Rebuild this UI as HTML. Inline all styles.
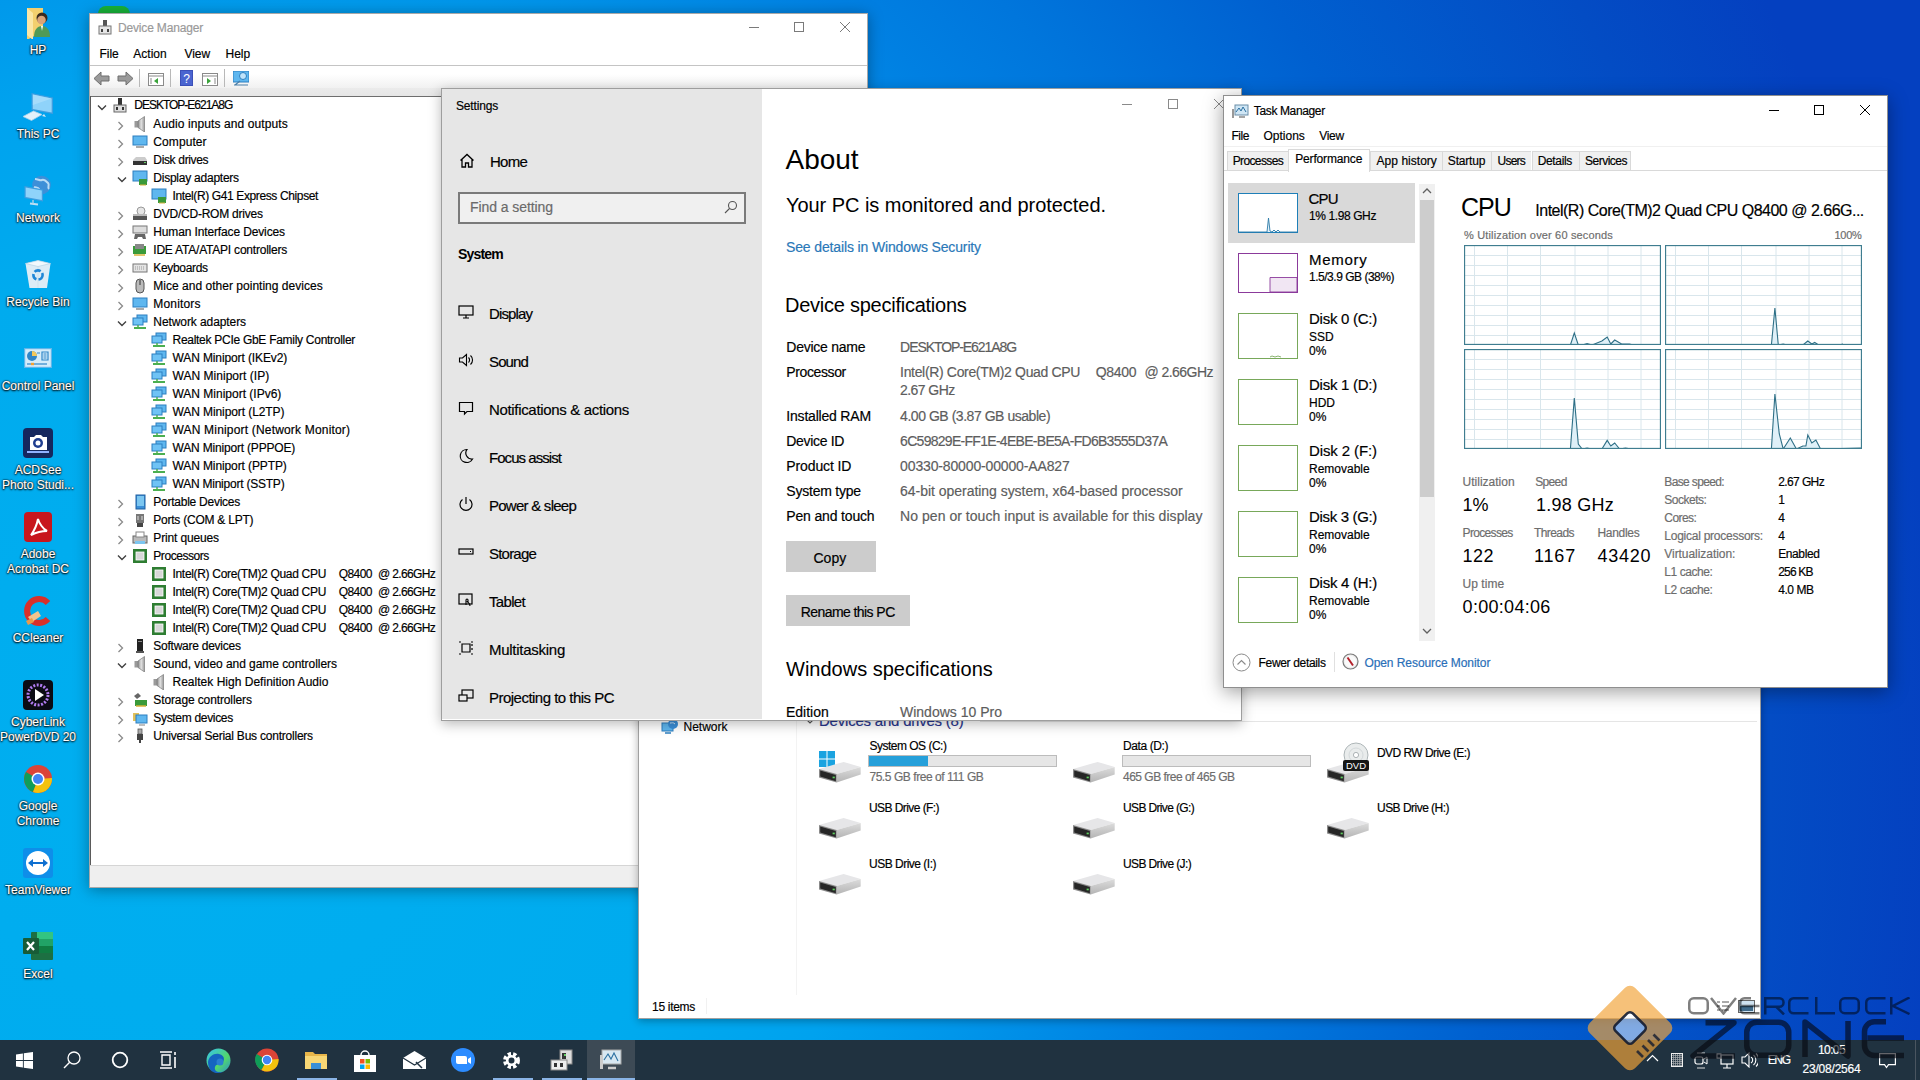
<!DOCTYPE html>
<html><head><meta charset="utf-8"><title>Desktop</title><style>
*{margin:0;padding:0;box-sizing:border-box}
html,body{width:1920px;height:1080px;overflow:hidden}
body{position:relative;font-family:'Liberation Sans',sans-serif;
 background:radial-gradient(circle at 190px 760px,#00aff0 0px,#00abee 500px,#00a2ee 680px,#0096ea 810px,#0080e2 1000px,#0076dc 1110px,#0060d0 1320px,#034cc4 1580px,#0440c0 1750px,#0440c0 2200px);}
.t{position:absolute;line-height:1;white-space:pre;font-family:"Liberation Sans",sans-serif;-webkit-text-stroke:.18px currentColor}
.r{position:absolute}
.win{position:absolute;overflow:hidden}
.dl{color:#fff;font-size:12px;text-shadow:0 0 2px #000,0 1px 2px #000,0 0 1px #000}
</style></head><body>
<svg class="r" style="left:22px;top:7px;" width="32" height="32" viewBox="0 0 32 32"><path d="M5 1h16v26l-5 0-11 6z" fill="#f3cf6e"/><path d="M5 1l6 5v27l-6-5z" fill="#fbe6a6"/><circle cx="20" cy="11" r="5.5" fill="#3b2a1e"/><circle cx="19.5" cy="13" r="4.3" fill="#d9a47a"/><path d="M12 30c0-7 3-11 8-11s8 4 8 11z" fill="#4f9a58"/><path d="M19 19l1 5 1-5z" fill="#fff"/></svg>
<div class="t dl" style="left:0;width:76px;text-align:center;top:44.2px">HP</div>
<svg class="r" style="left:22px;top:91px;" width="32" height="32" viewBox="0 0 32 32"><path d="M9.5 2L31 6.5V23L9.5 19z" fill="#3f9ee0"/><path d="M10.8 3.6L29.7 7.5V21.5L10.8 18z" fill="#8fd3fa"/><path d="M10.8 3.6L29.7 7.5 10.8 14z" fill="#b5e3fc" opacity=".6"/><path d="M22 23l-2 2 4 1" fill="#cfe6f3"/><path d="M1 25.5L11.5 20 20 23.5 9.5 29.5z" fill="#e2f1fa" stroke="#a9d1ea" stroke-width=".8"/></svg>
<div class="t dl" style="left:0;width:76px;text-align:center;top:128.2px">This PC</div>
<svg class="r" style="left:22px;top:175px;" width="32" height="32" viewBox="0 0 32 32"><circle cx="19.5" cy="10" r="9.3" fill="#3d8fd8"/><path d="M13 4c3 0 5 2 7 1s4 1 6 3-1 4 1 6M12 12c2 1 4 0 5 2s0 3 2 4" fill="none" stroke="#b8dcf6" stroke-width="2"/><path d="M2.5 11L21 14.5V26.5L2.5 23z" fill="#3f9ee0"/><path d="M3.7 12.5L19.8 15.5V25L3.7 22z" fill="#8fd3fa"/><path d="M8 28.5l8 1" stroke="#bfe0f4" stroke-width="2"/><path d="M11 25v3.5" stroke="#9fcde8" stroke-width="1.5"/></svg>
<div class="t dl" style="left:0;width:76px;text-align:center;top:212.2px">Network</div>
<svg class="r" style="left:22px;top:259px;" width="32" height="32" viewBox="0 0 32 32"><path d="M3.5 4.5L16 1.5 28.5 4.5 25 29H7.5z" fill="#dcecf6"/><path d="M3.5 4.5L16 1.5 28.5 4.5 16 7.5z" fill="#f2f9fd" stroke="#b7d3e4" stroke-width=".7"/><path d="M16 7.5V29" stroke="#c6dde9" stroke-width=".6"/><circle cx="16" cy="16" r="4.6" fill="none" stroke="#1f86d6" stroke-width="2.6" stroke-dasharray="6.5 2.2"/></svg>
<div class="t dl" style="left:0;width:76px;text-align:center;top:296.2px">Recycle Bin</div>
<svg class="r" style="left:22px;top:343px;" width="32" height="32" viewBox="0 0 32 32"><rect x="2" y="5" width="28" height="20" fill="#5fb6ea"/><rect x="3.2" y="6.2" width="25.6" height="17.6" fill="#d5ecfa"/><circle cx="10" cy="13" r="5" fill="#2f86c8"/><path d="M10 13V8a5 5 0 0 1 5 5z" fill="#f4c85a"/><path d="M15 10h3M20 9h6v8h-6z" fill="none" stroke="#2f86c8" stroke-width="1.2"/><path d="M21.5 11h3M21.5 13h3M21.5 15h3" stroke="#2f86c8" stroke-width="1"/><path d="M5 21h20" stroke="#2f86c8" stroke-width="1.2"/><rect x="9" y="19.8" width="3" height="2.4" fill="#f4a030"/></svg>
<div class="t dl" style="left:0;width:76px;text-align:center;top:380.2px">Control Panel</div>
<svg class="r" style="left:22px;top:427px;" width="32" height="32" viewBox="0 0 32 32"><rect x="1" y="1" width="30" height="30" rx="4" fill="#15275e"/><path d="M8 10h4l2-2h5l2 2h4v13H8z" fill="#fff"/><circle cx="16" cy="16" r="5" fill="#1e3d8f"/><circle cx="16" cy="16" r="2.5" fill="#fff"/><path d="M5 25h22" stroke="#8fb0ff" stroke-width="2"/></svg>
<div class="t dl" style="left:0;width:76px;text-align:center;top:464.2px">ACDSee</div>
<div class="t dl" style="left:0;width:76px;text-align:center;top:479.2px">Photo Studi...</div>
<svg class="r" style="left:22px;top:511px;" width="32" height="32" viewBox="0 0 32 32"><rect x="2" y="1" width="28" height="30" rx="4" fill="#c8161d"/><path d="M9 24c3-4 6-11 7-16 1 4 5 10 9 12-5 0-10 1-16 4z" fill="none" stroke="#fff" stroke-width="2"/></svg>
<div class="t dl" style="left:0;width:76px;text-align:center;top:548.2px">Adobe</div>
<div class="t dl" style="left:0;width:76px;text-align:center;top:563.2px">Acrobat DC</div>
<svg class="r" style="left:22px;top:595px;" width="32" height="32" viewBox="0 0 32 32"><path d="M26 8a12 12 0 1 0 0 16" fill="none" stroke="#d9302a" stroke-width="6"/><path d="M6 22l10-6 3 5-9 6z" fill="#f2c48e"/><path d="M4 26l6-3 2 4-6 3z" fill="#e89a4c"/></svg>
<div class="t dl" style="left:0;width:76px;text-align:center;top:632.2px">CCleaner</div>
<svg class="r" style="left:22px;top:679px;" width="32" height="32" viewBox="0 0 32 32"><rect x="1" y="1" width="30" height="30" rx="4" fill="#0b0b14"/><circle cx="16" cy="16" r="10" fill="none" stroke="#b07cf0" stroke-width="3" stroke-dasharray="2 1.5"/><path d="M13 10l9 6-9 6z" fill="#fff"/></svg>
<div class="t dl" style="left:0;width:76px;text-align:center;top:716.2px">CyberLink</div>
<div class="t dl" style="left:0;width:76px;text-align:center;top:731.2px">PowerDVD 20</div>
<svg class="r" style="left:22px;top:763px;" width="32" height="32" viewBox="0 0 32 32"><circle cx="16" cy="16" r="14" fill="#db4437"/><path d="M16 16L4 9A14 14 0 0 0 11 29z" fill="#0f9d58"/><path d="M16 16l-5 13A14 14 0 0 0 30 15z" fill="#f4c20d"/><circle cx="16" cy="16" r="6.5" fill="#fff"/><circle cx="16" cy="16" r="5" fill="#4285f4"/></svg>
<div class="t dl" style="left:0;width:76px;text-align:center;top:800.2px">Google</div>
<div class="t dl" style="left:0;width:76px;text-align:center;top:815.2px">Chrome</div>
<svg class="r" style="left:22px;top:847px;" width="32" height="32" viewBox="0 0 32 32"><rect x="1" y="1" width="30" height="30" rx="3" fill="#0e8ee9"/><circle cx="16" cy="16" r="12" fill="#fff"/><path d="M6 16l5-4v3h10v-3l5 4-5 4v-3H11v3z" fill="#0e6fd0"/></svg>
<div class="t dl" style="left:0;width:76px;text-align:center;top:884.2px">TeamViewer</div>
<svg class="r" style="left:22px;top:931px;" width="32" height="32" viewBox="0 0 32 32"><rect x="9" y="1" width="22" height="28" rx="1" fill="#1d6f42"/><rect x="15" y="1" width="16" height="7" fill="#33c481"/><rect x="15" y="8" width="16" height="7" fill="#21a366"/><rect x="15" y="15" width="16" height="7" fill="#107c41"/><rect x="1" y="7" width="16" height="16" rx="1" fill="#185c37"/><path d="M5 11l7 8M12 11l-7 8" stroke="#fff" stroke-width="2.2"/></svg>
<div class="t dl" style="left:0;width:76px;text-align:center;top:968.2px">Excel</div>
<div class="r" style="left:98px;top:6px;width:32px;height:8px;background:#18b33a;border-radius:14px 14px 0 0"></div>
<div class="win" style="left:89px;top:13px;width:779px;height:875px;background:#fff;border:1px solid #a8a8a8;box-shadow:0 2px 14px rgba(0,0,0,.35)"></div>
<svg class="r" style="left:98px;top:19px;" width="14" height="16" viewBox="0 0 14 16"><rect x="5" y="1" width="4" height="6" fill="#555"/><rect x="1" y="7" width="12" height="8" fill="#e6e6e6" stroke="#777" stroke-width="1"/><rect x="3" y="10" width="2" height="3" fill="#444"/><rect x="9" y="10" width="2" height="3" fill="#444"/></svg>
<div class="t" style="left:118.00px;top:21.86px;font-size:12px;color:#9a9a9a;letter-spacing:-0.170px;">Device Manager</div>
<div class="r" style="left:749px;top:27px;width:10px;height:1px;background:#7a7a7a;"></div>
<div class="r" style="left:794px;top:22px;width:10px;height:10px;background:transparent;border:1px solid #7a7a7a"></div>
<svg class="r" style="left:840px;top:22px;" width="10" height="10" viewBox="0 0 10 10"><path d="M0 0l10 10M10 0L0 10" stroke="#7a7a7a" stroke-width="1"/></svg>
<div class="t" style="left:99.40px;top:47.86px;font-size:12px;color:#000;">File</div>
<div class="t" style="left:133.30px;top:47.86px;font-size:12px;color:#000;">Action</div>
<div class="t" style="left:184.40px;top:47.86px;font-size:12px;color:#000;">View</div>
<div class="t" style="left:225.50px;top:47.86px;font-size:12px;color:#000;">Help</div>
<div class="r" style="left:90px;top:65px;width:777px;height:1px;background:#c4c4c4;"></div>
<div class="r" style="left:90px;top:74px;width:777px;height:14px;background:linear-gradient(#fff,#f1f1f1);"></div>
<div class="r" style="left:90px;top:88px;width:777px;height:8px;background:linear-gradient(#ebebeb,#e6e6e6);"></div>
<svg class="r" style="left:93px;top:71px;" width="17" height="15" viewBox="0 0 17 15"><path d="M1 7.5L8 1v4h8v5H8v4z" fill="#9a9a9a" stroke="#6e6e6e" stroke-width="1"/></svg>
<svg class="r" style="left:117px;top:71px;" width="17" height="15" viewBox="0 0 17 15"><path d="M16 7.5L9 1v4H1v5h8v4z" fill="#9a9a9a" stroke="#6e6e6e" stroke-width="1"/></svg>
<div class="r" style="left:139px;top:69px;width:1px;height:18px;background:#b8b8b8;"></div>
<div class="r" style="left:170px;top:69px;width:1px;height:18px;background:#b8b8b8;"></div>
<div class="r" style="left:224px;top:69px;width:1px;height:18px;background:#b8b8b8;"></div>
<svg class="r" style="left:148px;top:73px;" width="16" height="13" viewBox="0 0 16 13"><rect x=".5" y=".5" width="15" height="12" fill="#fff" stroke="#8a8a8a"/><path d="M1 3h14" stroke="#8a8a8a"/><path d="M10 5l-4 3 4 3z" fill="#3aa33a"/><path d="M2 6h2M2 8h2M2 10h2" stroke="#8a8a8a"/></svg>
<svg class="r" style="left:180px;top:70px;" width="13" height="16" viewBox="0 0 13 16"><rect x="0" y="0" width="13" height="16" fill="#3b4fb8"/><rect x="1" y="1" width="11" height="14" fill="#4a64d0"/><text x="6.5" y="12.5" font-size="12" font-family="Liberation Sans" fill="#fff" text-anchor="middle">?</text></svg>
<svg class="r" style="left:202px;top:73px;" width="16" height="13" viewBox="0 0 16 13"><rect x=".5" y=".5" width="15" height="12" fill="#fff" stroke="#8a8a8a"/><path d="M1 3h14" stroke="#8a8a8a"/><path d="M5 5l4 3-4 3z" fill="#3aa33a"/><path d="M12 6h2M12 8h2M12 10h2" stroke="#8a8a8a"/></svg>
<svg class="r" style="left:233px;top:71px;" width="16" height="15" viewBox="0 0 16 15"><rect x="0" y="0" width="16" height="11" fill="#5fb7ef" stroke="#2d7fc0" stroke-width="1"/><circle cx="10" cy="5" r="3.5" fill="#bfe3fa" stroke="#2d7fc0"/><path d="M2 14l5-4M1 14h14" stroke="#4a7fa8" stroke-width="1.2"/></svg>
<div class="r" style="left:90px;top:96px;width:777px;height:1px;background:#6e6e6e;"></div>
<div class="r" style="left:90px;top:96px;width:1px;height:769px;background:#5a5a5a;"></div>
<div class="r" style="left:90px;top:865px;width:777px;height:1px;background:#d5d5d5;"></div>
<div class="r" style="left:90px;top:866px;width:777px;height:21px;background:#efefef;"></div>
<svg class="r" style="left:97px;top:102.5px;" width="10" height="9" viewBox="0 0 10 9"><path d="M1 2.5l4 4 4-4" fill="none" stroke="#404040" stroke-width="1.4"/></svg>
<svg class="r" style="left:112px;top:97px;" width="16" height="16" viewBox="0 0 16 16"><rect x="6" y="1" width="4" height="7" fill="#333"/><rect x="2" y="8" width="12" height="7" fill="#ddd" stroke="#666" stroke-width="1"/><rect x="4" y="10" width="2" height="3" fill="#333"/><rect x="10" y="10" width="2" height="3" fill="#333"/></svg>
<div class="t" style="left:134.30px;top:99.36px;font-size:12px;color:#000;letter-spacing:-1.011px;">DESKTOP-E621A8G</div>
<svg class="r" style="left:117px;top:120.5px;" width="10" height="10" viewBox="0 0 10 10"><path d="M1.5 1l4 4-4 4" fill="none" stroke="#8a8a8a" stroke-width="1.3"/></svg>
<svg class="r" style="left:132px;top:116px;" width="16" height="16" viewBox="0 0 16 16"><defs><linearGradient id="spk" x1="0" y1="0" x2="1" y2="0"><stop offset="0" stop-color="#8c8c8c"/><stop offset=".5" stop-color="#e2e2e2"/><stop offset="1" stop-color="#9a9a9a"/></linearGradient></defs><rect x="2.5" y="5" width="3.5" height="6.5" fill="#9a9a9a"/><path d="M6 5L12.5 .5V16L6 11.5z" fill="url(#spk)" stroke="#7a7a7a" stroke-width=".7"/></svg>
<div class="t" style="left:153.30px;top:117.86px;font-size:12px;color:#000;letter-spacing:0.100px;">Audio inputs and outputs</div>
<svg class="r" style="left:117px;top:138.5px;" width="10" height="10" viewBox="0 0 10 10"><path d="M1.5 1l4 4-4 4" fill="none" stroke="#8a8a8a" stroke-width="1.3"/></svg>
<svg class="r" style="left:132px;top:134px;" width="16" height="16" viewBox="0 0 16 16"><rect x="1" y="2" width="14" height="9" fill="#5fb7ef" stroke="#2d7fc0" stroke-width="1"/><path d="M4 13h8" stroke="#aaa" stroke-width="2"/></svg>
<div class="t" style="left:153.30px;top:135.86px;font-size:12px;color:#000;letter-spacing:0.089px;">Computer</div>
<svg class="r" style="left:117px;top:156.5px;" width="10" height="10" viewBox="0 0 10 10"><path d="M1.5 1l4 4-4 4" fill="none" stroke="#8a8a8a" stroke-width="1.3"/></svg>
<svg class="r" style="left:132px;top:152px;" width="16" height="16" viewBox="0 0 16 16"><path d="M1 8l3-3h9l2 3v4H1z" fill="#ccc"/><rect x="1" y="9" width="14" height="4" fill="#333"/><rect x="12" y="10" width="2" height="1" fill="#6c6"/></svg>
<div class="t" style="left:153.30px;top:153.86px;font-size:12px;color:#000;letter-spacing:-0.335px;">Disk drives</div>
<svg class="r" style="left:117px;top:174.5px;" width="10" height="10" viewBox="0 0 10 10"><path d="M1 2.5l4 4 4-4" fill="none" stroke="#404040" stroke-width="1.4"/></svg>
<svg class="r" style="left:132px;top:170px;" width="16" height="16" viewBox="0 0 16 16"><rect x="1" y="1" width="14" height="10" fill="#5fb7ef" stroke="#2d7fc0" stroke-width="1"/><rect x="7" y="9" width="8" height="6" fill="#3a9a3a"/><path d="M8 15h6" stroke="#d8b23a" stroke-width="1"/></svg>
<div class="t" style="left:153.30px;top:171.86px;font-size:12px;color:#000;letter-spacing:-0.237px;">Display adapters</div>
<svg class="r" style="left:151px;top:188px;" width="16" height="16" viewBox="0 0 16 16"><rect x="1" y="1" width="14" height="10" fill="#5fb7ef" stroke="#2d7fc0" stroke-width="1"/><rect x="7" y="9" width="8" height="6" fill="#3a9a3a"/><path d="M8 15h6" stroke="#d8b23a" stroke-width="1"/></svg>
<div class="t" style="left:172.50px;top:189.86px;font-size:12px;color:#000;letter-spacing:-0.377px;">Intel(R) G41 Express Chipset</div>
<svg class="r" style="left:117px;top:210.5px;" width="10" height="10" viewBox="0 0 10 10"><path d="M1.5 1l4 4-4 4" fill="none" stroke="#8a8a8a" stroke-width="1.3"/></svg>
<svg class="r" style="left:132px;top:206px;" width="16" height="16" viewBox="0 0 16 16"><circle cx="9" cy="5" r="4" fill="#e6e6e6" stroke="#999" stroke-width="1"/><rect x="1" y="9" width="14" height="5" fill="#555"/><rect x="1" y="8" width="14" height="2" fill="#bbb"/></svg>
<div class="t" style="left:153.30px;top:207.86px;font-size:12px;color:#000;letter-spacing:-0.232px;">DVD/CD-ROM drives</div>
<svg class="r" style="left:117px;top:228.5px;" width="10" height="10" viewBox="0 0 10 10"><path d="M1.5 1l4 4-4 4" fill="none" stroke="#8a8a8a" stroke-width="1.3"/></svg>
<svg class="r" style="left:132px;top:224px;" width="16" height="16" viewBox="0 0 16 16"><rect x="1" y="2" width="14" height="7" fill="#ddd" stroke="#777" stroke-width="1"/><path d="M3 10h10l1 5h-3l-1-2H6l-1 2H2z" fill="#666"/></svg>
<div class="t" style="left:153.30px;top:225.86px;font-size:12px;color:#000;letter-spacing:-0.136px;">Human Interface Devices</div>
<svg class="r" style="left:117px;top:246.5px;" width="10" height="10" viewBox="0 0 10 10"><path d="M1.5 1l4 4-4 4" fill="none" stroke="#8a8a8a" stroke-width="1.3"/></svg>
<svg class="r" style="left:132px;top:242px;" width="16" height="16" viewBox="0 0 16 16"><rect x="1" y="4" width="13" height="8" fill="#3a9a3a"/><rect x="3" y="2" width="9" height="5" fill="#888"/><path d="M2 13h11" stroke="#d8b23a" stroke-width="1.5"/></svg>
<div class="t" style="left:153.30px;top:243.86px;font-size:12px;color:#000;letter-spacing:-0.214px;">IDE ATA/ATAPI controllers</div>
<svg class="r" style="left:117px;top:264.5px;" width="10" height="10" viewBox="0 0 10 10"><path d="M1.5 1l4 4-4 4" fill="none" stroke="#8a8a8a" stroke-width="1.3"/></svg>
<svg class="r" style="left:132px;top:260px;" width="16" height="16" viewBox="0 0 16 16"><rect x="1" y="4" width="14" height="8" fill="#e4e4e4" stroke="#777" stroke-width="1"/><path d="M3 7h10M3 9h10" stroke="#999" stroke-width="1" stroke-dasharray="1 1"/></svg>
<div class="t" style="left:153.30px;top:261.86px;font-size:12px;color:#000;letter-spacing:-0.319px;">Keyboards</div>
<svg class="r" style="left:117px;top:282.5px;" width="10" height="10" viewBox="0 0 10 10"><path d="M1.5 1l4 4-4 4" fill="none" stroke="#8a8a8a" stroke-width="1.3"/></svg>
<svg class="r" style="left:132px;top:278px;" width="16" height="16" viewBox="0 0 16 16"><rect x="4" y="1" width="8" height="14" rx="4" fill="#bbb" stroke="#555" stroke-width="1"/><path d="M8 2v5" stroke="#333"/></svg>
<div class="t" style="left:153.30px;top:279.86px;font-size:12px;color:#000;letter-spacing:0.020px;">Mice and other pointing devices</div>
<svg class="r" style="left:117px;top:300.5px;" width="10" height="10" viewBox="0 0 10 10"><path d="M1.5 1l4 4-4 4" fill="none" stroke="#8a8a8a" stroke-width="1.3"/></svg>
<svg class="r" style="left:132px;top:296px;" width="16" height="16" viewBox="0 0 16 16"><rect x="1" y="2" width="14" height="9" fill="#5fb7ef" stroke="#2d7fc0" stroke-width="1"/><path d="M4 13h8" stroke="#aaa" stroke-width="2"/></svg>
<div class="t" style="left:153.30px;top:297.86px;font-size:12px;color:#000;letter-spacing:0.173px;">Monitors</div>
<svg class="r" style="left:117px;top:318.5px;" width="10" height="10" viewBox="0 0 10 10"><path d="M1 2.5l4 4 4-4" fill="none" stroke="#404040" stroke-width="1.4"/></svg>
<svg class="r" style="left:132px;top:314px;" width="16" height="16" viewBox="0 0 16 16"><rect x="5" y="1" width="10" height="7" fill="#5fb7ef" stroke="#2d7fc0" stroke-width="1"/><rect x="1" y="4" width="10" height="7" fill="#6fc3f5" stroke="#2d7fc0" stroke-width="1"/><path d="M2 14h12" stroke="#4caf50" stroke-width="2"/><path d="M6 11v3" stroke="#4caf50" stroke-width="1.5"/></svg>
<div class="t" style="left:153.30px;top:315.86px;font-size:12px;color:#000;letter-spacing:-0.084px;">Network adapters</div>
<svg class="r" style="left:151px;top:332px;" width="16" height="16" viewBox="0 0 16 16"><rect x="5" y="1" width="10" height="7" fill="#5fb7ef" stroke="#2d7fc0" stroke-width="1"/><rect x="1" y="4" width="10" height="7" fill="#6fc3f5" stroke="#2d7fc0" stroke-width="1"/><path d="M2 14h12" stroke="#4caf50" stroke-width="2"/><path d="M6 11v3" stroke="#4caf50" stroke-width="1.5"/></svg>
<div class="t" style="left:172.50px;top:333.86px;font-size:12px;color:#000;letter-spacing:-0.279px;">Realtek PCIe GbE Family Controller</div>
<svg class="r" style="left:151px;top:350px;" width="16" height="16" viewBox="0 0 16 16"><rect x="5" y="1" width="10" height="7" fill="#5fb7ef" stroke="#2d7fc0" stroke-width="1"/><rect x="1" y="4" width="10" height="7" fill="#6fc3f5" stroke="#2d7fc0" stroke-width="1"/><path d="M2 14h12" stroke="#4caf50" stroke-width="2"/><path d="M6 11v3" stroke="#4caf50" stroke-width="1.5"/></svg>
<div class="t" style="left:172.50px;top:351.86px;font-size:12px;color:#000;letter-spacing:-0.115px;">WAN Miniport (IKEv2)</div>
<svg class="r" style="left:151px;top:368px;" width="16" height="16" viewBox="0 0 16 16"><rect x="5" y="1" width="10" height="7" fill="#5fb7ef" stroke="#2d7fc0" stroke-width="1"/><rect x="1" y="4" width="10" height="7" fill="#6fc3f5" stroke="#2d7fc0" stroke-width="1"/><path d="M2 14h12" stroke="#4caf50" stroke-width="2"/><path d="M6 11v3" stroke="#4caf50" stroke-width="1.5"/></svg>
<div class="t" style="left:172.50px;top:369.86px;font-size:12px;color:#000;letter-spacing:0.033px;">WAN Miniport (IP)</div>
<svg class="r" style="left:151px;top:386px;" width="16" height="16" viewBox="0 0 16 16"><rect x="5" y="1" width="10" height="7" fill="#5fb7ef" stroke="#2d7fc0" stroke-width="1"/><rect x="1" y="4" width="10" height="7" fill="#6fc3f5" stroke="#2d7fc0" stroke-width="1"/><path d="M2 14h12" stroke="#4caf50" stroke-width="2"/><path d="M6 11v3" stroke="#4caf50" stroke-width="1.5"/></svg>
<div class="t" style="left:172.50px;top:387.86px;font-size:12px;color:#000;letter-spacing:-0.006px;">WAN Miniport (IPv6)</div>
<svg class="r" style="left:151px;top:404px;" width="16" height="16" viewBox="0 0 16 16"><rect x="5" y="1" width="10" height="7" fill="#5fb7ef" stroke="#2d7fc0" stroke-width="1"/><rect x="1" y="4" width="10" height="7" fill="#6fc3f5" stroke="#2d7fc0" stroke-width="1"/><path d="M2 14h12" stroke="#4caf50" stroke-width="2"/><path d="M6 11v3" stroke="#4caf50" stroke-width="1.5"/></svg>
<div class="t" style="left:172.50px;top:405.86px;font-size:12px;color:#000;letter-spacing:-0.088px;">WAN Miniport (L2TP)</div>
<svg class="r" style="left:151px;top:422px;" width="16" height="16" viewBox="0 0 16 16"><rect x="5" y="1" width="10" height="7" fill="#5fb7ef" stroke="#2d7fc0" stroke-width="1"/><rect x="1" y="4" width="10" height="7" fill="#6fc3f5" stroke="#2d7fc0" stroke-width="1"/><path d="M2 14h12" stroke="#4caf50" stroke-width="2"/><path d="M6 11v3" stroke="#4caf50" stroke-width="1.5"/></svg>
<div class="t" style="left:172.50px;top:423.86px;font-size:12px;color:#000;letter-spacing:0.182px;">WAN Miniport (Network Monitor)</div>
<svg class="r" style="left:151px;top:440px;" width="16" height="16" viewBox="0 0 16 16"><rect x="5" y="1" width="10" height="7" fill="#5fb7ef" stroke="#2d7fc0" stroke-width="1"/><rect x="1" y="4" width="10" height="7" fill="#6fc3f5" stroke="#2d7fc0" stroke-width="1"/><path d="M2 14h12" stroke="#4caf50" stroke-width="2"/><path d="M6 11v3" stroke="#4caf50" stroke-width="1.5"/></svg>
<div class="t" style="left:172.50px;top:441.86px;font-size:12px;color:#000;letter-spacing:-0.183px;">WAN Miniport (PPPOE)</div>
<svg class="r" style="left:151px;top:458px;" width="16" height="16" viewBox="0 0 16 16"><rect x="5" y="1" width="10" height="7" fill="#5fb7ef" stroke="#2d7fc0" stroke-width="1"/><rect x="1" y="4" width="10" height="7" fill="#6fc3f5" stroke="#2d7fc0" stroke-width="1"/><path d="M2 14h12" stroke="#4caf50" stroke-width="2"/><path d="M6 11v3" stroke="#4caf50" stroke-width="1.5"/></svg>
<div class="t" style="left:172.50px;top:459.86px;font-size:12px;color:#000;letter-spacing:-0.107px;">WAN Miniport (PPTP)</div>
<svg class="r" style="left:151px;top:476px;" width="16" height="16" viewBox="0 0 16 16"><rect x="5" y="1" width="10" height="7" fill="#5fb7ef" stroke="#2d7fc0" stroke-width="1"/><rect x="1" y="4" width="10" height="7" fill="#6fc3f5" stroke="#2d7fc0" stroke-width="1"/><path d="M2 14h12" stroke="#4caf50" stroke-width="2"/><path d="M6 11v3" stroke="#4caf50" stroke-width="1.5"/></svg>
<div class="t" style="left:172.50px;top:477.86px;font-size:12px;color:#000;letter-spacing:-0.228px;">WAN Miniport (SSTP)</div>
<svg class="r" style="left:117px;top:498.5px;" width="10" height="10" viewBox="0 0 10 10"><path d="M1.5 1l4 4-4 4" fill="none" stroke="#8a8a8a" stroke-width="1.3"/></svg>
<svg class="r" style="left:132px;top:494px;" width="16" height="16" viewBox="0 0 16 16"><rect x="4" y="1" width="9" height="14" fill="#3a8fd8" stroke="#1f5f9f" stroke-width="1"/><rect x="5" y="2" width="7" height="10" fill="#7cc6f0"/></svg>
<div class="t" style="left:153.30px;top:495.86px;font-size:12px;color:#000;letter-spacing:-0.251px;">Portable Devices</div>
<svg class="r" style="left:117px;top:516.5px;" width="10" height="10" viewBox="0 0 10 10"><path d="M1.5 1l4 4-4 4" fill="none" stroke="#8a8a8a" stroke-width="1.3"/></svg>
<svg class="r" style="left:132px;top:512px;" width="16" height="16" viewBox="0 0 16 16"><rect x="4" y="2" width="8" height="9" fill="#777"/><rect x="5" y="11" width="6" height="4" fill="#444"/><path d="M6 4v4M10 4v4" stroke="#ddd"/></svg>
<div class="t" style="left:153.30px;top:513.86px;font-size:12px;color:#000;letter-spacing:-0.236px;">Ports (COM &amp; LPT)</div>
<svg class="r" style="left:117px;top:534.5px;" width="10" height="10" viewBox="0 0 10 10"><path d="M1.5 1l4 4-4 4" fill="none" stroke="#8a8a8a" stroke-width="1.3"/></svg>
<svg class="r" style="left:132px;top:530px;" width="16" height="16" viewBox="0 0 16 16"><rect x="1" y="6" width="14" height="7" fill="#bbb" stroke="#666" stroke-width="1"/><rect x="4" y="2" width="8" height="5" fill="#fff" stroke="#888" stroke-width="1"/><rect x="3" y="11" width="10" height="3" fill="#7cc6f0"/></svg>
<div class="t" style="left:153.30px;top:531.86px;font-size:12px;color:#000;letter-spacing:-0.149px;">Print queues</div>
<svg class="r" style="left:117px;top:552.5px;" width="10" height="10" viewBox="0 0 10 10"><path d="M1 2.5l4 4 4-4" fill="none" stroke="#404040" stroke-width="1.4"/></svg>
<svg class="r" style="left:132px;top:548px;" width="16" height="16" viewBox="0 0 16 16"><rect x="1" y="1" width="14" height="14" fill="#2e7d32"/><rect x="4" y="4" width="8" height="8" fill="#d8d8d8" stroke="#fff" stroke-width=".8"/></svg>
<div class="t" style="left:153.30px;top:549.86px;font-size:12px;color:#000;letter-spacing:-0.443px;">Processors</div>
<svg class="r" style="left:151px;top:566px;" width="16" height="16" viewBox="0 0 16 16"><rect x="1" y="1" width="14" height="14" fill="#2e7d32"/><rect x="4" y="4" width="8" height="8" fill="#d8d8d8" stroke="#fff" stroke-width=".8"/></svg>
<div class="t" style="left:172.50px;top:567.86px;font-size:12px;color:#000;letter-spacing:-0.317px;">Intel(R) Core(TM)2 Quad CPU</div>
<div class="t" style="left:338.80px;top:567.86px;font-size:12px;color:#000;letter-spacing:-0.606px;">Q8400</div>
<div class="t" style="left:378.00px;top:567.86px;font-size:12px;color:#000;letter-spacing:-0.653px;">@ 2.66GHz</div>
<svg class="r" style="left:151px;top:584px;" width="16" height="16" viewBox="0 0 16 16"><rect x="1" y="1" width="14" height="14" fill="#2e7d32"/><rect x="4" y="4" width="8" height="8" fill="#d8d8d8" stroke="#fff" stroke-width=".8"/></svg>
<div class="t" style="left:172.50px;top:585.86px;font-size:12px;color:#000;letter-spacing:-0.317px;">Intel(R) Core(TM)2 Quad CPU</div>
<div class="t" style="left:338.80px;top:585.86px;font-size:12px;color:#000;letter-spacing:-0.606px;">Q8400</div>
<div class="t" style="left:378.00px;top:585.86px;font-size:12px;color:#000;letter-spacing:-0.653px;">@ 2.66GHz</div>
<svg class="r" style="left:151px;top:602px;" width="16" height="16" viewBox="0 0 16 16"><rect x="1" y="1" width="14" height="14" fill="#2e7d32"/><rect x="4" y="4" width="8" height="8" fill="#d8d8d8" stroke="#fff" stroke-width=".8"/></svg>
<div class="t" style="left:172.50px;top:603.86px;font-size:12px;color:#000;letter-spacing:-0.317px;">Intel(R) Core(TM)2 Quad CPU</div>
<div class="t" style="left:338.80px;top:603.86px;font-size:12px;color:#000;letter-spacing:-0.606px;">Q8400</div>
<div class="t" style="left:378.00px;top:603.86px;font-size:12px;color:#000;letter-spacing:-0.653px;">@ 2.66GHz</div>
<svg class="r" style="left:151px;top:620px;" width="16" height="16" viewBox="0 0 16 16"><rect x="1" y="1" width="14" height="14" fill="#2e7d32"/><rect x="4" y="4" width="8" height="8" fill="#d8d8d8" stroke="#fff" stroke-width=".8"/></svg>
<div class="t" style="left:172.50px;top:621.86px;font-size:12px;color:#000;letter-spacing:-0.317px;">Intel(R) Core(TM)2 Quad CPU</div>
<div class="t" style="left:338.80px;top:621.86px;font-size:12px;color:#000;letter-spacing:-0.606px;">Q8400</div>
<div class="t" style="left:378.00px;top:621.86px;font-size:12px;color:#000;letter-spacing:-0.653px;">@ 2.66GHz</div>
<svg class="r" style="left:117px;top:642.5px;" width="10" height="10" viewBox="0 0 10 10"><path d="M1.5 1l4 4-4 4" fill="none" stroke="#8a8a8a" stroke-width="1.3"/></svg>
<svg class="r" style="left:132px;top:638px;" width="16" height="16" viewBox="0 0 16 16"><rect x="5" y="1" width="6" height="12" fill="#222"/><rect x="4" y="13" width="8" height="2" fill="#555"/><rect x="6" y="3" width="4" height="1" fill="#888"/></svg>
<div class="t" style="left:153.30px;top:639.86px;font-size:12px;color:#000;letter-spacing:-0.249px;">Software devices</div>
<svg class="r" style="left:117px;top:660.5px;" width="10" height="10" viewBox="0 0 10 10"><path d="M1 2.5l4 4 4-4" fill="none" stroke="#404040" stroke-width="1.4"/></svg>
<svg class="r" style="left:132px;top:656px;" width="16" height="16" viewBox="0 0 16 16"><defs><linearGradient id="spk" x1="0" y1="0" x2="1" y2="0"><stop offset="0" stop-color="#8c8c8c"/><stop offset=".5" stop-color="#e2e2e2"/><stop offset="1" stop-color="#9a9a9a"/></linearGradient></defs><rect x="2.5" y="5" width="3.5" height="6.5" fill="#9a9a9a"/><path d="M6 5L12.5 .5V16L6 11.5z" fill="url(#spk)" stroke="#7a7a7a" stroke-width=".7"/></svg>
<div class="t" style="left:153.30px;top:657.86px;font-size:12px;color:#000;letter-spacing:-0.056px;">Sound, video and game controllers</div>
<svg class="r" style="left:151px;top:674px;" width="16" height="16" viewBox="0 0 16 16"><defs><linearGradient id="spk" x1="0" y1="0" x2="1" y2="0"><stop offset="0" stop-color="#8c8c8c"/><stop offset=".5" stop-color="#e2e2e2"/><stop offset="1" stop-color="#9a9a9a"/></linearGradient></defs><rect x="2.5" y="5" width="3.5" height="6.5" fill="#9a9a9a"/><path d="M6 5L12.5 .5V16L6 11.5z" fill="url(#spk)" stroke="#7a7a7a" stroke-width=".7"/></svg>
<div class="t" style="left:172.50px;top:675.86px;font-size:12px;color:#000;letter-spacing:0.016px;">Realtek High Definition Audio</div>
<svg class="r" style="left:117px;top:696.5px;" width="10" height="10" viewBox="0 0 10 10"><path d="M1.5 1l4 4-4 4" fill="none" stroke="#8a8a8a" stroke-width="1.3"/></svg>
<svg class="r" style="left:132px;top:692px;" width="16" height="16" viewBox="0 0 16 16"><path d="M2 4l4-3 3 3-4 3z" fill="#666"/><rect x="3" y="8" width="12" height="6" fill="#3a9a3a"/><path d="M4 14h10" stroke="#d8b23a" stroke-width="1.5"/></svg>
<div class="t" style="left:153.30px;top:693.86px;font-size:12px;color:#000;letter-spacing:-0.117px;">Storage controllers</div>
<svg class="r" style="left:117px;top:714.5px;" width="10" height="10" viewBox="0 0 10 10"><path d="M1.5 1l4 4-4 4" fill="none" stroke="#8a8a8a" stroke-width="1.3"/></svg>
<svg class="r" style="left:132px;top:710px;" width="16" height="16" viewBox="0 0 16 16"><rect x="1" y="3" width="6" height="8" fill="#e2c15b"/><rect x="4" y="5" width="11" height="8" fill="#5fb7ef" stroke="#2d7fc0" stroke-width="1"/><path d="M7 15h6" stroke="#aaa" stroke-width="1.5"/></svg>
<div class="t" style="left:153.30px;top:711.86px;font-size:12px;color:#000;letter-spacing:-0.317px;">System devices</div>
<svg class="r" style="left:117px;top:732.5px;" width="10" height="10" viewBox="0 0 10 10"><path d="M1.5 1l4 4-4 4" fill="none" stroke="#8a8a8a" stroke-width="1.3"/></svg>
<svg class="r" style="left:132px;top:728px;" width="16" height="16" viewBox="0 0 16 16"><rect x="6" y="1" width="4" height="5" fill="#aaa" stroke="#555" stroke-width=".8"/><rect x="5" y="6" width="6" height="6" fill="#444"/><rect x="7" y="12" width="2" height="3" fill="#444"/></svg>
<div class="t" style="left:153.30px;top:729.86px;font-size:12px;color:#000;letter-spacing:-0.223px;">Universal Serial Bus controllers</div>
<div class="win" style="left:638px;top:100px;width:1123px;height:919px;background:#fff;border:1px solid #a0a0a0;box-shadow:0 2px 8px rgba(0,0,0,.3)"></div>
<div class="r" style="left:796px;top:700px;width:1px;height:295px;background:#f3f3f3;"></div>
<svg class="r" style="left:661px;top:718px;" width="18" height="16" viewBox="0 0 18 16"><rect x="1" y="5" width="11" height="8" fill="#5fb7ef" stroke="#2d7fc0"/><circle cx="12" cy="6" r="5" fill="#3a8fd8"/><path d="M9 5c2 0 3-1 5 1" stroke="#cfe9ff" fill="none"/><path d="M4 15h6" stroke="#2d7fc0" stroke-width="1.5"/></svg>
<div class="t" style="left:683.50px;top:720.86px;font-size:12px;color:#000;letter-spacing:-0.002px;">Network</div>
<div class="t" style="left:819.00px;top:712.83px;font-size:15px;color:#27358c;letter-spacing:-0.215px;">Devices and drives (8)</div>
<div class="r" style="left:980px;top:721px;width:777px;height:1px;background:#e5e5e5;"></div>
<svg class="r" style="left:805px;top:718px;" width="10" height="7" viewBox="0 0 10 7"><path d="M1 1l4 4 4-4" fill="none" stroke="#555" stroke-width="1.2"/></svg>
<svg class="r" style="left:819px;top:751px;" width="17" height="17" viewBox="0 0 17 17"><rect x="0" y="0" width="7.5" height="7.5" fill="#1aa3e0"/><rect x="8.5" y="0" width="7.5" height="7.5" fill="#1aa3e0"/><rect x="0" y="8.5" width="7.5" height="7.5" fill="#1aa3e0"/><rect x="8.5" y="8.5" width="7.5" height="7.5" fill="#1aa3e0"/></svg>
<svg class="r" style="left:814px;top:754px;" width="52" height="32" viewBox="0 0 52 32"><defs><linearGradient id="hr" x1="0" y1="0" x2="0" y2="1"><stop offset="0" stop-color="#dcdcdc"/><stop offset="1" stop-color="#b4b4b4"/></linearGradient></defs><path d="M5 15.1L29.6 7.9 46.7 13 22.7 19.9z" fill="#e6e6e8"/><path d="M22.7 19.9L46.7 13V20.6L22.7 28.6z" fill="url(#hr)"/><path d="M5 15.1L22.7 19.9V28.6L5 23.4z" fill="#8a8a8a"/><path d="M6.2 16.6L21.8 20.9V27.2L6.2 22.6z" fill="#262626"/><rect x="18.6" y="22.6" width="2.2" height="1.7" fill="#5fcf5f"/></svg>
<div class="t" style="left:869.40px;top:739.86px;font-size:12px;color:#000;letter-spacing:-0.501px;">System OS (C:)</div>
<div class="r" style="left:868px;top:755px;width:189px;height:12px;background:#e6e6e6;border:1px solid #bcbcbc"></div>
<div class="r" style="left:869px;top:756px;width:59px;height:10px;background:#26a0da;"></div>
<div class="t" style="left:869.40px;top:771.36px;font-size:12px;color:#6d6d6d;letter-spacing:-0.438px;">75.5 GB free of 111 GB</div>
<svg class="r" style="left:1068px;top:754px;" width="52" height="32" viewBox="0 0 52 32"><defs><linearGradient id="hr" x1="0" y1="0" x2="0" y2="1"><stop offset="0" stop-color="#dcdcdc"/><stop offset="1" stop-color="#b4b4b4"/></linearGradient></defs><path d="M5 15.1L29.6 7.9 46.7 13 22.7 19.9z" fill="#e6e6e8"/><path d="M22.7 19.9L46.7 13V20.6L22.7 28.6z" fill="url(#hr)"/><path d="M5 15.1L22.7 19.9V28.6L5 23.4z" fill="#8a8a8a"/><path d="M6.2 16.6L21.8 20.9V27.2L6.2 22.6z" fill="#262626"/><rect x="18.6" y="22.6" width="2.2" height="1.7" fill="#5fcf5f"/></svg>
<div class="t" style="left:1123.00px;top:739.86px;font-size:12px;color:#000;letter-spacing:-0.410px;">Data (D:)</div>
<div class="r" style="left:1122px;top:755px;width:189px;height:12px;background:#e6e6e6;border:1px solid #bcbcbc"></div>
<div class="t" style="left:1123.00px;top:771.36px;font-size:12px;color:#6d6d6d;letter-spacing:-0.504px;">465 GB free of 465 GB</div>
<svg class="r" style="left:1322px;top:740px;" width="52" height="46" viewBox="0 0 52 46"><g transform="translate(0 14)"><defs><linearGradient id="hr2" x1="0" y1="0" x2="0" y2="1"><stop offset="0" stop-color="#dcdcdc"/><stop offset="1" stop-color="#b4b4b4"/></linearGradient></defs><path d="M5 15.1L29.6 7.9 46.7 13 22.7 19.9z" fill="#e6e6e8"/><path d="M22.7 19.9L46.7 13V20.6L22.7 28.6z" fill="url(#hr2)"/><path d="M5 15.1L22.7 19.9V28.6L5 23.4z" fill="#8a8a8a"/><path d="M6.2 16.6L21.8 20.9V27.2L6.2 22.6z" fill="#262626"/><rect x="18.6" y="22.6" width="2.2" height="1.7" fill="#5fcf5f"/></g><circle cx="34" cy="15" r="12" fill="#e9ecec" stroke="#aeb6b8" stroke-width="1"/><circle cx="34" cy="15" r="7" fill="none" stroke="#d3d8da" stroke-width="1"/><circle cx="34" cy="15" r="2.6" fill="#fff" stroke="#9aa2a4" stroke-width=".8"/><rect x="21" y="20" width="26" height="11" rx="2" fill="#161616"/><text x="34" y="29.2" font-size="9.5" font-family="Liberation Sans" fill="#fff" text-anchor="middle">DVD</text></svg>
<div class="t" style="left:1377.00px;top:747.06px;font-size:12px;color:#000;letter-spacing:-0.556px;">DVD RW Drive (E:)</div>
<svg class="r" style="left:814px;top:810px;" width="52" height="32" viewBox="0 0 52 32"><defs><linearGradient id="hr" x1="0" y1="0" x2="0" y2="1"><stop offset="0" stop-color="#dcdcdc"/><stop offset="1" stop-color="#b4b4b4"/></linearGradient></defs><path d="M5 15.1L29.6 7.9 46.7 13 22.7 19.9z" fill="#e6e6e8"/><path d="M22.7 19.9L46.7 13V20.6L22.7 28.6z" fill="url(#hr)"/><path d="M5 15.1L22.7 19.9V28.6L5 23.4z" fill="#8a8a8a"/><path d="M6.2 16.6L21.8 20.9V27.2L6.2 22.6z" fill="#262626"/><rect x="18.6" y="22.6" width="2.2" height="1.7" fill="#5fcf5f"/></svg>
<div class="t" style="left:869.00px;top:802.36px;font-size:12px;color:#000;letter-spacing:-0.571px;">USB Drive (F:)</div>
<svg class="r" style="left:1068px;top:810px;" width="52" height="32" viewBox="0 0 52 32"><defs><linearGradient id="hr" x1="0" y1="0" x2="0" y2="1"><stop offset="0" stop-color="#dcdcdc"/><stop offset="1" stop-color="#b4b4b4"/></linearGradient></defs><path d="M5 15.1L29.6 7.9 46.7 13 22.7 19.9z" fill="#e6e6e8"/><path d="M22.7 19.9L46.7 13V20.6L22.7 28.6z" fill="url(#hr)"/><path d="M5 15.1L22.7 19.9V28.6L5 23.4z" fill="#8a8a8a"/><path d="M6.2 16.6L21.8 20.9V27.2L6.2 22.6z" fill="#262626"/><rect x="18.6" y="22.6" width="2.2" height="1.7" fill="#5fcf5f"/></svg>
<div class="t" style="left:1123.00px;top:802.36px;font-size:12px;color:#000;letter-spacing:-0.644px;">USB Drive (G:)</div>
<svg class="r" style="left:1322px;top:810px;" width="52" height="32" viewBox="0 0 52 32"><defs><linearGradient id="hr" x1="0" y1="0" x2="0" y2="1"><stop offset="0" stop-color="#dcdcdc"/><stop offset="1" stop-color="#b4b4b4"/></linearGradient></defs><path d="M5 15.1L29.6 7.9 46.7 13 22.7 19.9z" fill="#e6e6e8"/><path d="M22.7 19.9L46.7 13V20.6L22.7 28.6z" fill="url(#hr)"/><path d="M5 15.1L22.7 19.9V28.6L5 23.4z" fill="#8a8a8a"/><path d="M6.2 16.6L21.8 20.9V27.2L6.2 22.6z" fill="#262626"/><rect x="18.6" y="22.6" width="2.2" height="1.7" fill="#5fcf5f"/></svg>
<div class="t" style="left:1377.00px;top:802.36px;font-size:12px;color:#000;letter-spacing:-0.525px;">USB Drive (H:)</div>
<svg class="r" style="left:814px;top:866px;" width="52" height="32" viewBox="0 0 52 32"><defs><linearGradient id="hr" x1="0" y1="0" x2="0" y2="1"><stop offset="0" stop-color="#dcdcdc"/><stop offset="1" stop-color="#b4b4b4"/></linearGradient></defs><path d="M5 15.1L29.6 7.9 46.7 13 22.7 19.9z" fill="#e6e6e8"/><path d="M22.7 19.9L46.7 13V20.6L22.7 28.6z" fill="url(#hr)"/><path d="M5 15.1L22.7 19.9V28.6L5 23.4z" fill="#8a8a8a"/><path d="M6.2 16.6L21.8 20.9V27.2L6.2 22.6z" fill="#262626"/><rect x="18.6" y="22.6" width="2.2" height="1.7" fill="#5fcf5f"/></svg>
<div class="t" style="left:869.00px;top:858.36px;font-size:12px;color:#000;letter-spacing:-0.501px;">USB Drive (I:)</div>
<svg class="r" style="left:1068px;top:866px;" width="52" height="32" viewBox="0 0 52 32"><defs><linearGradient id="hr" x1="0" y1="0" x2="0" y2="1"><stop offset="0" stop-color="#dcdcdc"/><stop offset="1" stop-color="#b4b4b4"/></linearGradient></defs><path d="M5 15.1L29.6 7.9 46.7 13 22.7 19.9z" fill="#e6e6e8"/><path d="M22.7 19.9L46.7 13V20.6L22.7 28.6z" fill="url(#hr)"/><path d="M5 15.1L22.7 19.9V28.6L5 23.4z" fill="#8a8a8a"/><path d="M6.2 16.6L21.8 20.9V27.2L6.2 22.6z" fill="#262626"/><rect x="18.6" y="22.6" width="2.2" height="1.7" fill="#5fcf5f"/></svg>
<div class="t" style="left:1123.00px;top:858.36px;font-size:12px;color:#000;letter-spacing:-0.619px;">USB Drive (J:)</div>
<div class="t" style="left:652.00px;top:1000.66px;font-size:12px;color:#000;letter-spacing:-0.295px;">15 items</div>
<div class="r" style="left:706px;top:998px;width:1px;height:16px;background:#f1f1f1;"></div>
<svg class="r" style="left:1716px;top:1000px;" width="14" height="14" viewBox="0 0 14 14"><path d="M1 2h3M1 6h3M1 10h3M6 2h7M6 6h7M6 10h7" stroke="#555"/></svg>
<svg class="r" style="left:1738px;top:1000px;" width="18" height="14" viewBox="0 0 18 14"><rect x=".5" y=".5" width="16" height="12" fill="#cfe2f0" stroke="#666"/><rect x="2" y="6" width="13" height="5" fill="#3f6a8a"/></svg>
<div class="win" style="left:441px;top:88px;width:801px;height:633px;background:#fff;border:1px solid #9e9e9e;box-shadow:0 3px 12px rgba(0,0,0,.28)"></div>
<div class="r" style="left:442px;top:89px;width:320px;height:630px;background:#e6e6e6;"></div>
<div class="t" style="left:456.00px;top:99.56px;font-size:12px;color:#000;letter-spacing:-0.170px;">Settings</div>
<div class="r" style="left:1122px;top:104px;width:10px;height:1px;background:#8a8a8a;"></div>
<div class="r" style="left:1168px;top:99px;width:10px;height:10px;background:transparent;border:1px solid #8a8a8a"></div>
<svg class="r" style="left:1214px;top:99px;" width="10" height="10" viewBox="0 0 10 10"><path d="M0 0l10 10M10 0L0 10" stroke="#8a8a8a" stroke-width="1"/></svg>
<svg class="r" style="left:459px;top:153px;" width="16" height="16" viewBox="0 0 16 16"><path d="M1.5 7.5L8 1.5l6.5 6M3 6.5v7.5h3.5v-4h3v4H13V6.5" fill="none" stroke="#000" stroke-width="1.3"/></svg>
<div class="t" style="left:490.00px;top:153.62px;font-size:15px;color:#000;letter-spacing:-0.754px;">Home</div>
<div class="r" style="left:458px;top:192px;width:288px;height:32px;background:#f0f0f0;border:2px solid #7a7a7a"></div>
<div class="t" style="left:470.00px;top:199.97px;font-size:14px;color:#6a6a6a;letter-spacing:-0.076px;">Find a setting</div>
<svg class="r" style="left:724px;top:200px;" width="14" height="14" viewBox="0 0 14 14"><circle cx="8.5" cy="5.5" r="4" fill="none" stroke="#555" stroke-width="1.1"/><path d="M5.5 8.5L1 13" stroke="#555" stroke-width="1.1"/></svg>
<div class="t" style="left:458.00px;top:247.17px;font-size:14px;color:#000;font-weight:700;letter-spacing:-0.802px;-webkit-text-stroke:0;">System</div>
<svg class="r" style="left:458px;top:304.0px;" width="16" height="16" viewBox="0 0 16 16"><rect x="1" y="2" width="14" height="9" fill="none" stroke="#000" stroke-width="1.2"/><path d="M8 11v3M5 14h6" stroke="#000" stroke-width="1.2"/></svg>
<div class="t" style="left:489.00px;top:305.82px;font-size:15px;color:#000;letter-spacing:-0.884px;">Display</div>
<svg class="r" style="left:458px;top:352.0px;" width="16" height="16" viewBox="0 0 16 16"><path d="M1.5 6h3l4-3.5v11l-4-3.5h-3z" fill="none" stroke="#000" stroke-width="1.1"/><path d="M10.5 5.5a3.5 3.5 0 0 1 0 5M12.5 3.5a6 6 0 0 1 0 9" fill="none" stroke="#000" stroke-width="1.1"/></svg>
<div class="t" style="left:489.00px;top:353.82px;font-size:15px;color:#000;letter-spacing:-0.875px;">Sound</div>
<svg class="r" style="left:458px;top:400.0px;" width="16" height="16" viewBox="0 0 16 16"><path d="M1.5 2.5h13v9H9l-2.5 2.5v-2.5h-5z" fill="none" stroke="#000" stroke-width="1.2"/></svg>
<div class="t" style="left:489.00px;top:401.82px;font-size:15px;color:#000;letter-spacing:-0.329px;">Notifications &amp; actions</div>
<svg class="r" style="left:458px;top:448.0px;" width="16" height="16" viewBox="0 0 16 16"><path d="M9 1.5a6.5 6.5 0 1 0 5.5 9.5A6 6 0 0 1 9 1.5z" fill="none" stroke="#000" stroke-width="1.2"/></svg>
<div class="t" style="left:489.00px;top:449.82px;font-size:15px;color:#000;letter-spacing:-0.947px;">Focus assist</div>
<svg class="r" style="left:458px;top:496.0px;" width="16" height="16" viewBox="0 0 16 16"><path d="M8 1v7" stroke="#000" stroke-width="1.2"/><path d="M4.5 3.5a6 6 0 1 0 7 0" fill="none" stroke="#000" stroke-width="1.2"/></svg>
<div class="t" style="left:489.00px;top:497.82px;font-size:15px;color:#000;letter-spacing:-0.748px;">Power &amp; sleep</div>
<svg class="r" style="left:458px;top:544.0px;" width="16" height="16" viewBox="0 0 16 16"><rect x="1" y="5" width="14" height="5" fill="none" stroke="#000" stroke-width="1.2"/><path d="M12 7.5h1" stroke="#000"/></svg>
<div class="t" style="left:489.00px;top:545.83px;font-size:15px;color:#000;letter-spacing:-0.792px;">Storage</div>
<svg class="r" style="left:458px;top:592.0px;" width="16" height="16" viewBox="0 0 16 16"><rect x="1" y="2" width="13" height="10" fill="none" stroke="#000" stroke-width="1.2"/><path d="M9 9c1 2 3 2 3 5M8 13v-5a1 1 0 0 1 2 0v3" fill="none" stroke="#000" stroke-width="1.1"/></svg>
<div class="t" style="left:489.00px;top:593.83px;font-size:15px;color:#000;letter-spacing:-0.672px;">Tablet</div>
<svg class="r" style="left:458px;top:640.0px;" width="16" height="16" viewBox="0 0 16 16"><path d="M1 2h2M1 14h2M4 4h8v8H4zM13 2h2M13 14h2M14 4v2M14 8v2" fill="none" stroke="#000" stroke-width="1.2"/></svg>
<div class="t" style="left:489.00px;top:641.83px;font-size:15px;color:#000;letter-spacing:-0.267px;">Multitasking</div>
<svg class="r" style="left:458px;top:688.0px;" width="16" height="16" viewBox="0 0 16 16"><rect x="4" y="2" width="11" height="8" fill="none" stroke="#000" stroke-width="1.2"/><rect x="1" y="7" width="8" height="6" fill="#e6e6e6" stroke="#000" stroke-width="1.2"/></svg>
<div class="t" style="left:489.00px;top:689.83px;font-size:15px;color:#000;letter-spacing:-0.519px;">Projecting to this PC</div>
<div class="t" style="left:785.50px;top:146.34px;font-size:28px;color:#000;letter-spacing:-0.034px;-webkit-text-stroke:0;">About</div>
<div class="t" style="left:786.00px;top:194.90px;font-size:20px;color:#000;letter-spacing:-0.048px;-webkit-text-stroke:0;">Your PC is monitored and protected.</div>
<div class="t" style="left:786.00px;top:240.17px;font-size:14px;color:#2a78b8;letter-spacing:-0.136px;">See details in Windows Security</div>
<div class="t" style="left:785.00px;top:294.90px;font-size:20px;color:#000;letter-spacing:-0.250px;-webkit-text-stroke:0;">Device specifications</div>
<div class="t" style="left:786.30px;top:340.17px;font-size:14px;color:#000;letter-spacing:-0.246px;">Device name</div>
<div class="t" style="left:900.10px;top:340.17px;font-size:14px;color:#5d5d5d;letter-spacing:-1.069px;">DESKTOP-E621A8G</div>
<div class="t" style="left:786.30px;top:365.37px;font-size:14px;color:#000;letter-spacing:-0.392px;">Processor</div>
<div class="t" style="left:786.30px;top:409.17px;font-size:14px;color:#000;letter-spacing:-0.197px;">Installed RAM</div>
<div class="t" style="left:900.10px;top:409.17px;font-size:14px;color:#5d5d5d;letter-spacing:-0.462px;">4.00 GB (3.87 GB usable)</div>
<div class="t" style="left:786.30px;top:434.17px;font-size:14px;color:#000;letter-spacing:-0.321px;">Device ID</div>
<div class="t" style="left:900.10px;top:434.17px;font-size:14px;color:#5d5d5d;letter-spacing:-0.711px;">6C59829E-FF1E-4EBE-BE5A-FD6B3555D37A</div>
<div class="t" style="left:786.30px;top:459.17px;font-size:14px;color:#000;letter-spacing:-0.114px;">Product ID</div>
<div class="t" style="left:900.10px;top:459.17px;font-size:14px;color:#5d5d5d;letter-spacing:-0.144px;">00330-80000-00000-AA827</div>
<div class="t" style="left:786.30px;top:484.17px;font-size:14px;color:#000;letter-spacing:-0.221px;">System type</div>
<div class="t" style="left:900.10px;top:484.17px;font-size:14px;color:#5d5d5d;letter-spacing:-0.035px;">64-bit operating system, x64-based processor</div>
<div class="t" style="left:786.30px;top:509.17px;font-size:14px;color:#000;letter-spacing:-0.161px;">Pen and touch</div>
<div class="t" style="left:900.10px;top:509.17px;font-size:14px;color:#5d5d5d;letter-spacing:0.039px;">No pen or touch input is available for this display</div>
<div class="t" style="left:900.10px;top:365.37px;font-size:14px;color:#5d5d5d;letter-spacing:-0.335px;">Intel(R) Core(TM)2 Quad CPU</div>
<div class="t" style="left:1095.70px;top:365.37px;font-size:14px;color:#5d5d5d;letter-spacing:-0.309px;">Q8400</div>
<div class="t" style="left:1144.50px;top:365.37px;font-size:14px;color:#5d5d5d;letter-spacing:-0.540px;">@ 2.66GHz</div>
<div class="t" style="left:900.10px;top:383.37px;font-size:14px;color:#5d5d5d;letter-spacing:-0.580px;">2.67 GHz</div>
<div class="r" style="left:786px;top:541px;width:90px;height:31px;background:#cccccc;"></div>
<div class="t" style="left:813.50px;top:550.67px;font-size:14px;color:#000;">Copy</div>
<div class="r" style="left:786px;top:595px;width:124px;height:31px;background:#cccccc;"></div>
<div class="t" style="left:800.70px;top:604.67px;font-size:14px;color:#000;letter-spacing:-0.567px;">Rename this PC</div>
<div class="t" style="left:786.00px;top:659.10px;font-size:20px;color:#000;-webkit-text-stroke:0;">Windows specifications</div>
<div class="t" style="left:786.00px;top:705.17px;font-size:14px;color:#000;">Edition</div>
<div class="t" style="left:900.00px;top:705.17px;font-size:14px;color:#5d5d5d;">Windows 10 Pro</div>
<div class="win" style="left:1223px;top:95px;width:665px;height:593px;background:#fff;border:1px solid #8f8f8f;box-shadow:0 4px 18px rgba(0,0,0,.38)"></div>
<svg class="r" style="left:1231px;top:104px;" width="18" height="15" viewBox="0 0 18 15"><rect x="4" y="1" width="13" height="10" fill="#cfe6f5" stroke="#6a8ea8"/><path d="M5 8l3-4 2 3 2-4 3 5" fill="none" stroke="#2a6fa0" stroke-width="1"/><rect x="1" y="5" width="2" height="9" fill="#999"/><path d="M8 13h6" stroke="#888" stroke-width="1.5"/></svg>
<div class="t" style="left:1253.80px;top:104.96px;font-size:12px;color:#000;letter-spacing:-0.365px;">Task Manager</div>
<div class="r" style="left:1769px;top:110px;width:10px;height:1px;background:#000;"></div>
<div class="r" style="left:1814px;top:105px;width:10px;height:10px;background:transparent;border:1px solid #000"></div>
<svg class="r" style="left:1860px;top:105px;" width="10" height="10" viewBox="0 0 10 10"><path d="M0 0l10 10M10 0L0 10" stroke="#000" stroke-width="1"/></svg>
<div class="t" style="left:1231.40px;top:130.16px;font-size:12px;color:#000;letter-spacing:-0.461px;">File</div>
<div class="t" style="left:1263.40px;top:130.16px;font-size:12px;color:#000;letter-spacing:0.020px;">Options</div>
<div class="t" style="left:1319.30px;top:130.16px;font-size:12px;color:#000;letter-spacing:-0.324px;">View</div>
<div class="r" style="left:1224px;top:146px;width:663px;height:1px;background:#f0f0f0;"></div>
<div class="r" style="left:1224px;top:170px;width:663px;height:1px;background:#d9d9d9;"></div>
<div class="r" style="left:1226.5px;top:150.5px;width:61.09999999999991px;height:20px;background:#f0f0f0;border:1px solid #d9d9d9;border-right:none"></div>
<div class="t" style="left:1232.70px;top:154.66px;font-size:12px;color:#000;letter-spacing:-0.626px;">Processes</div>
<div class="r" style="left:1287.6px;top:148.5px;width:82.80000000000018px;height:23px;background:#fff;border:1px solid #d9d9d9;border-bottom:none"></div>
<div class="t" style="left:1295.20px;top:152.66px;font-size:12px;color:#000;letter-spacing:-0.155px;">Performance</div>
<div class="r" style="left:1370.4px;top:150.5px;width:71.19999999999982px;height:20px;background:#f0f0f0;border:1px solid #d9d9d9;border-right:none"></div>
<div class="t" style="left:1376.60px;top:154.66px;font-size:12px;color:#000;letter-spacing:0.024px;">App history</div>
<div class="r" style="left:1441.6px;top:150.5px;width:49.700000000000045px;height:20px;background:#f0f0f0;border:1px solid #d9d9d9;border-right:none"></div>
<div class="t" style="left:1447.80px;top:154.66px;font-size:12px;color:#000;letter-spacing:-0.172px;">Startup</div>
<div class="r" style="left:1491.3px;top:150.5px;width:40.200000000000045px;height:20px;background:#f0f0f0;border:1px solid #d9d9d9;border-right:none"></div>
<div class="t" style="left:1497.50px;top:154.66px;font-size:12px;color:#000;letter-spacing:-0.769px;">Users</div>
<div class="r" style="left:1531.5px;top:150.5px;width:47.299999999999955px;height:20px;background:#f0f0f0;border:1px solid #d9d9d9;border-right:none"></div>
<div class="t" style="left:1537.70px;top:154.66px;font-size:12px;color:#000;letter-spacing:-0.348px;">Details</div>
<div class="r" style="left:1578.8px;top:150.5px;width:52.0px;height:20px;background:#f0f0f0;border:1px solid #d9d9d9"></div>
<div class="t" style="left:1585.00px;top:154.66px;font-size:12px;color:#000;letter-spacing:-0.502px;">Services</div>
<div class="r" style="left:1228px;top:183px;width:187px;height:60px;background:#d9d9d9;"></div>
<svg class="r" style="left:1238px;top:193px;" width="60" height="40" viewBox="0 0 60 40"><rect x=".5" y=".5" width="59" height="39" fill="#fff" stroke="#1e7fb8"/><path d="M1 39L29 39 30.5 25 32 38 34 39 36 37 38 39 40 37 42 39 59 39" fill="#e3f1f9" stroke="#2b7aa8" stroke-width=".9"/></svg>
<div class="t" style="left:1308.60px;top:191.32px;font-size:15px;color:#000;letter-spacing:-0.891px;">CPU</div>
<div class="t" style="left:1309.00px;top:210.26px;font-size:12px;color:#000;letter-spacing:-0.398px;">1% 1.98 GHz</div>
<svg class="r" style="left:1238px;top:253px;" width="60" height="40" viewBox="0 0 60 40"><rect x=".5" y=".5" width="59" height="39" fill="#fff" stroke="#8b3a9b"/><path d="M32 39V24.5h27V39z" fill="#f1e6f3" stroke="#8b3a9b" stroke-width=".9"/></svg>
<div class="t" style="left:1309.00px;top:251.72px;font-size:15px;color:#000;letter-spacing:0.721px;">Memory</div>
<div class="t" style="left:1309.00px;top:270.56px;font-size:12px;color:#000;letter-spacing:-0.482px;">1.5/3.9 GB (38%)</div>
<svg class="r" style="left:1238px;top:313px;" width="60" height="46" viewBox="0 0 60 46"><rect x=".5" y=".5" width="59" height="45" fill="#fff" stroke="#78a85a"/><path d="M32 44l2-1 3 1 3-1 3 1" stroke="#6aa04a" fill="none" stroke-width=".8"/></svg>
<div class="t" style="left:1309.00px;top:311.22px;font-size:15px;color:#000;letter-spacing:-0.259px;">Disk 0 (C:)</div>
<div class="t" style="left:1309.00px;top:330.66px;font-size:12px;color:#000;">SSD</div>
<div class="t" style="left:1309.00px;top:344.96px;font-size:12px;color:#000;">0%</div>
<svg class="r" style="left:1238px;top:379px;" width="60" height="46" viewBox="0 0 60 46"><rect x=".5" y=".5" width="59" height="45" fill="#fff" stroke="#78a85a"/></svg>
<div class="t" style="left:1309.00px;top:377.22px;font-size:15px;color:#000;letter-spacing:-0.259px;">Disk 1 (D:)</div>
<div class="t" style="left:1309.00px;top:396.66px;font-size:12px;color:#000;">HDD</div>
<div class="t" style="left:1309.00px;top:410.96px;font-size:12px;color:#000;">0%</div>
<svg class="r" style="left:1238px;top:445px;" width="60" height="46" viewBox="0 0 60 46"><rect x=".5" y=".5" width="59" height="45" fill="#fff" stroke="#78a85a"/></svg>
<div class="t" style="left:1309.00px;top:443.22px;font-size:15px;color:#000;letter-spacing:-0.107px;">Disk 2 (F:)</div>
<div class="t" style="left:1309.00px;top:462.66px;font-size:12px;color:#000;">Removable</div>
<div class="t" style="left:1309.00px;top:476.96px;font-size:12px;color:#000;">0%</div>
<svg class="r" style="left:1238px;top:511px;" width="60" height="46" viewBox="0 0 60 46"><rect x=".5" y=".5" width="59" height="45" fill="#fff" stroke="#78a85a"/></svg>
<div class="t" style="left:1309.00px;top:509.22px;font-size:15px;color:#000;letter-spacing:-0.334px;">Disk 3 (G:)</div>
<div class="t" style="left:1309.00px;top:528.66px;font-size:12px;color:#000;">Removable</div>
<div class="t" style="left:1309.00px;top:542.96px;font-size:12px;color:#000;">0%</div>
<svg class="r" style="left:1238px;top:577px;" width="60" height="46" viewBox="0 0 60 46"><rect x=".5" y=".5" width="59" height="45" fill="#fff" stroke="#78a85a"/></svg>
<div class="t" style="left:1309.00px;top:575.23px;font-size:15px;color:#000;letter-spacing:-0.259px;">Disk 4 (H:)</div>
<div class="t" style="left:1309.00px;top:594.66px;font-size:12px;color:#000;">Removable</div>
<div class="t" style="left:1309.00px;top:608.96px;font-size:12px;color:#000;">0%</div>
<div class="r" style="left:1419px;top:184px;width:16px;height:457px;background:#f0f0f0;"></div>
<div class="r" style="left:1420px;top:200px;width:14px;height:297px;background:#cdcdcd;"></div>
<svg class="r" style="left:1421px;top:186px;" width="12" height="10" viewBox="0 0 12 10"><path d="M2 7l4-4 4 4" fill="none" stroke="#606060" stroke-width="1.3"/></svg>
<svg class="r" style="left:1421px;top:626px;" width="12" height="10" viewBox="0 0 12 10"><path d="M2 3l4 4 4-4" fill="none" stroke="#606060" stroke-width="1.3"/></svg>
<div class="t" style="left:1461.00px;top:195.07px;font-size:25px;color:#000;letter-spacing:-0.932px;-webkit-text-stroke:0;">CPU</div>
<div class="t" style="left:1535.30px;top:203.48px;font-size:16px;color:#000;letter-spacing:-0.502px;">Intel(R) Core(TM)2 Quad CPU Q8400 @ 2.66G...</div>
<div class="t" style="left:1464.00px;top:230.31px;font-size:11px;color:#6d6d6d;letter-spacing:0.162px;">% Utilization over 60 seconds</div>
<div class="t" style="left:1834.50px;top:230.31px;font-size:11px;color:#6d6d6d;letter-spacing:-0.285px;">100%</div>
<svg class="r" style="left:1464px;top:245px;" width="197" height="100" viewBox="0 0 197 100"><path d="M0 10.5H197" stroke="#d9e6ec" stroke-width="1"/><path d="M0 20.5H197" stroke="#d9e6ec" stroke-width="1"/><path d="M0 30.5H197" stroke="#d9e6ec" stroke-width="1"/><path d="M0 40.5H197" stroke="#d9e6ec" stroke-width="1"/><path d="M0 50.5H197" stroke="#d9e6ec" stroke-width="1"/><path d="M0 60.5H197" stroke="#d9e6ec" stroke-width="1"/><path d="M0 70.5H197" stroke="#d9e6ec" stroke-width="1"/><path d="M0 80.5H197" stroke="#d9e6ec" stroke-width="1"/><path d="M0 90.5H197" stroke="#d9e6ec" stroke-width="1"/><path d="M10.5 0V100" stroke="#d9e6ec" stroke-width="1"/><path d="M43.5 0V100" stroke="#d9e6ec" stroke-width="1"/><path d="M76.5 0V100" stroke="#d9e6ec" stroke-width="1"/><path d="M111.0 0V100" stroke="#d9e6ec" stroke-width="1"/><path d="M144.0 0V100" stroke="#d9e6ec" stroke-width="1"/><path d="M177.0 0V100" stroke="#d9e6ec" stroke-width="1"/><path d="M0.0 100.0 L106.4 100.0 L110.3 88.0 L114.3 100.0 L118.2 100.0 L123.1 98.5 L128.1 100.0 L137.9 96.0 L143.2 92.0 L146.8 99.0 L150.7 95.0 L157.6 99.0 L165.5 99.0 L169.4 100.0 L197.0 100.0  L197 100 L0 100 z" fill="#dff0f8"/><path d="M0.0 100.0 L106.4 100.0 L110.3 88.0 L114.3 100.0 L118.2 100.0 L123.1 98.5 L128.1 100.0 L137.9 96.0 L143.2 92.0 L146.8 99.0 L150.7 95.0 L157.6 99.0 L165.5 99.0 L169.4 100.0 L197.0 100.0 " fill="none" stroke="#2e6f86" stroke-width="1.1"/><rect x=".5" y=".5" width="196" height="99" fill="none" stroke="#3f7d90" stroke-width="1.3"/></svg>
<svg class="r" style="left:1665px;top:245px;" width="197" height="100" viewBox="0 0 197 100"><path d="M0 10.5H197" stroke="#d9e6ec" stroke-width="1"/><path d="M0 20.5H197" stroke="#d9e6ec" stroke-width="1"/><path d="M0 30.5H197" stroke="#d9e6ec" stroke-width="1"/><path d="M0 40.5H197" stroke="#d9e6ec" stroke-width="1"/><path d="M0 50.5H197" stroke="#d9e6ec" stroke-width="1"/><path d="M0 60.5H197" stroke="#d9e6ec" stroke-width="1"/><path d="M0 70.5H197" stroke="#d9e6ec" stroke-width="1"/><path d="M0 80.5H197" stroke="#d9e6ec" stroke-width="1"/><path d="M0 90.5H197" stroke="#d9e6ec" stroke-width="1"/><path d="M10.5 0V100" stroke="#d9e6ec" stroke-width="1"/><path d="M43.5 0V100" stroke="#d9e6ec" stroke-width="1"/><path d="M76.5 0V100" stroke="#d9e6ec" stroke-width="1"/><path d="M111.0 0V100" stroke="#d9e6ec" stroke-width="1"/><path d="M144.0 0V100" stroke="#d9e6ec" stroke-width="1"/><path d="M177.0 0V100" stroke="#d9e6ec" stroke-width="1"/><path d="M0.0 100.0 L106.4 100.0 L109.9 63.0 L113.3 100.0 L118.2 99.0 L122.1 100.0 L137.9 100.0 L142.8 96.0 L146.8 99.0 L149.7 97.5 L153.7 100.0 L175.3 100.0 L177.3 99.2 L179.3 100.0 L197.0 100.0  L197 100 L0 100 z" fill="#dff0f8"/><path d="M0.0 100.0 L106.4 100.0 L109.9 63.0 L113.3 100.0 L118.2 99.0 L122.1 100.0 L137.9 100.0 L142.8 96.0 L146.8 99.0 L149.7 97.5 L153.7 100.0 L175.3 100.0 L177.3 99.2 L179.3 100.0 L197.0 100.0 " fill="none" stroke="#2e6f86" stroke-width="1.1"/><rect x=".5" y=".5" width="196" height="99" fill="none" stroke="#3f7d90" stroke-width="1.3"/></svg>
<svg class="r" style="left:1464px;top:349px;" width="197" height="100" viewBox="0 0 197 100"><path d="M0 10.5H197" stroke="#d9e6ec" stroke-width="1"/><path d="M0 20.5H197" stroke="#d9e6ec" stroke-width="1"/><path d="M0 30.5H197" stroke="#d9e6ec" stroke-width="1"/><path d="M0 40.5H197" stroke="#d9e6ec" stroke-width="1"/><path d="M0 50.5H197" stroke="#d9e6ec" stroke-width="1"/><path d="M0 60.5H197" stroke="#d9e6ec" stroke-width="1"/><path d="M0 70.5H197" stroke="#d9e6ec" stroke-width="1"/><path d="M0 80.5H197" stroke="#d9e6ec" stroke-width="1"/><path d="M0 90.5H197" stroke="#d9e6ec" stroke-width="1"/><path d="M10.5 0V100" stroke="#d9e6ec" stroke-width="1"/><path d="M43.5 0V100" stroke="#d9e6ec" stroke-width="1"/><path d="M76.5 0V100" stroke="#d9e6ec" stroke-width="1"/><path d="M111.0 0V100" stroke="#d9e6ec" stroke-width="1"/><path d="M144.0 0V100" stroke="#d9e6ec" stroke-width="1"/><path d="M177.0 0V100" stroke="#d9e6ec" stroke-width="1"/><path d="M0.0 100.0 L106.4 100.0 L110.3 49.0 L114.3 95.0 L118.2 100.0 L123.1 99.0 L128.1 100.0 L137.9 100.0 L143.2 91.4 L146.8 97.0 L150.7 94.0 L155.6 100.0 L161.5 99.0 L167.4 100.0 L197.0 100.0  L197 100 L0 100 z" fill="#dff0f8"/><path d="M0.0 100.0 L106.4 100.0 L110.3 49.0 L114.3 95.0 L118.2 100.0 L123.1 99.0 L128.1 100.0 L137.9 100.0 L143.2 91.4 L146.8 97.0 L150.7 94.0 L155.6 100.0 L161.5 99.0 L167.4 100.0 L197.0 100.0 " fill="none" stroke="#2e6f86" stroke-width="1.1"/><rect x=".5" y=".5" width="196" height="99" fill="none" stroke="#3f7d90" stroke-width="1.3"/></svg>
<svg class="r" style="left:1665px;top:349px;" width="197" height="100" viewBox="0 0 197 100"><path d="M0 10.5H197" stroke="#d9e6ec" stroke-width="1"/><path d="M0 20.5H197" stroke="#d9e6ec" stroke-width="1"/><path d="M0 30.5H197" stroke="#d9e6ec" stroke-width="1"/><path d="M0 40.5H197" stroke="#d9e6ec" stroke-width="1"/><path d="M0 50.5H197" stroke="#d9e6ec" stroke-width="1"/><path d="M0 60.5H197" stroke="#d9e6ec" stroke-width="1"/><path d="M0 70.5H197" stroke="#d9e6ec" stroke-width="1"/><path d="M0 80.5H197" stroke="#d9e6ec" stroke-width="1"/><path d="M0 90.5H197" stroke="#d9e6ec" stroke-width="1"/><path d="M10.5 0V100" stroke="#d9e6ec" stroke-width="1"/><path d="M43.5 0V100" stroke="#d9e6ec" stroke-width="1"/><path d="M76.5 0V100" stroke="#d9e6ec" stroke-width="1"/><path d="M111.0 0V100" stroke="#d9e6ec" stroke-width="1"/><path d="M144.0 0V100" stroke="#d9e6ec" stroke-width="1"/><path d="M177.0 0V100" stroke="#d9e6ec" stroke-width="1"/><path d="M0.0 100.0 L106.4 100.0 L109.9 45.0 L114.3 85.0 L118.2 100.0 L125.3 89.0 L131.4 100.0 L137.9 97.0 L140.9 97.0 L142.8 86.0 L146.8 94.0 L150.9 91.0 L155.6 100.0 L197.0 99.0  L197 100 L0 100 z" fill="#dff0f8"/><path d="M0.0 100.0 L106.4 100.0 L109.9 45.0 L114.3 85.0 L118.2 100.0 L125.3 89.0 L131.4 100.0 L137.9 97.0 L140.9 97.0 L142.8 86.0 L146.8 94.0 L150.9 91.0 L155.6 100.0 L197.0 99.0 " fill="none" stroke="#2e6f86" stroke-width="1.1"/><rect x=".5" y=".5" width="196" height="99" fill="none" stroke="#3f7d90" stroke-width="1.3"/></svg>
<div class="t" style="left:1462.60px;top:475.86px;font-size:12px;color:#6d6d6d;letter-spacing:-0.003px;">Utilization</div>
<div class="t" style="left:1535.20px;top:475.86px;font-size:12px;color:#6d6d6d;letter-spacing:-0.641px;">Speed</div>
<div class="t" style="left:1462.60px;top:495.59px;font-size:18px;color:#000;letter-spacing:-0.008px;-webkit-text-stroke:0;">1%</div>
<div class="t" style="left:1536.00px;top:495.59px;font-size:18px;color:#000;letter-spacing:0.244px;-webkit-text-stroke:0;">1.98 GHz</div>
<div class="t" style="left:1462.60px;top:527.06px;font-size:12px;color:#6d6d6d;letter-spacing:-0.670px;">Processes</div>
<div class="t" style="left:1534.00px;top:527.06px;font-size:12px;color:#6d6d6d;letter-spacing:-0.576px;">Threads</div>
<div class="t" style="left:1597.40px;top:527.06px;font-size:12px;color:#6d6d6d;letter-spacing:-0.290px;">Handles</div>
<div class="t" style="left:1462.60px;top:547.19px;font-size:18px;color:#000;letter-spacing:0.484px;-webkit-text-stroke:0;">122</div>
<div class="t" style="left:1534.00px;top:547.19px;font-size:18px;color:#000;letter-spacing:0.820px;-webkit-text-stroke:0;">1167</div>
<div class="t" style="left:1597.40px;top:547.19px;font-size:18px;color:#000;letter-spacing:0.787px;-webkit-text-stroke:0;">43420</div>
<div class="t" style="left:1462.60px;top:577.86px;font-size:12px;color:#6d6d6d;letter-spacing:0.022px;">Up time</div>
<div class="t" style="left:1462.60px;top:597.59px;font-size:18px;color:#000;letter-spacing:0.292px;-webkit-text-stroke:0;">0:00:04:06</div>
<div class="t" style="left:1664.30px;top:475.86px;font-size:12px;color:#6d6d6d;letter-spacing:-0.638px;">Base speed:</div>
<div class="t" style="left:1778.20px;top:475.86px;font-size:12px;color:#000;letter-spacing:-0.600px;">2.67 GHz</div>
<div class="t" style="left:1664.30px;top:493.86px;font-size:12px;color:#6d6d6d;letter-spacing:-0.504px;">Sockets:</div>
<div class="t" style="left:1778.20px;top:493.86px;font-size:12px;color:#000;">1</div>
<div class="t" style="left:1664.30px;top:511.86px;font-size:12px;color:#6d6d6d;letter-spacing:-0.557px;">Cores:</div>
<div class="t" style="left:1778.20px;top:511.86px;font-size:12px;color:#000;">4</div>
<div class="t" style="left:1664.30px;top:529.86px;font-size:12px;color:#6d6d6d;letter-spacing:-0.252px;">Logical processors:</div>
<div class="t" style="left:1778.20px;top:529.86px;font-size:12px;color:#000;">4</div>
<div class="t" style="left:1664.30px;top:547.86px;font-size:12px;color:#6d6d6d;letter-spacing:-0.055px;">Virtualization:</div>
<div class="t" style="left:1778.20px;top:547.86px;font-size:12px;color:#000;letter-spacing:-0.392px;">Enabled</div>
<div class="t" style="left:1664.30px;top:565.86px;font-size:12px;color:#6d6d6d;letter-spacing:-0.450px;">L1 cache:</div>
<div class="t" style="left:1778.20px;top:565.86px;font-size:12px;color:#000;letter-spacing:-0.829px;">256 KB</div>
<div class="t" style="left:1664.30px;top:583.86px;font-size:12px;color:#6d6d6d;letter-spacing:-0.450px;">L2 cache:</div>
<div class="t" style="left:1778.20px;top:583.86px;font-size:12px;color:#000;letter-spacing:-0.419px;">4.0 MB</div>
<svg class="r" style="left:1232px;top:653px;" width="19" height="19" viewBox="0 0 19 19"><circle cx="9.5" cy="9.5" r="8.5" fill="none" stroke="#8a8a8a"/><path d="M5.5 11.5l4-4 4 4" fill="none" stroke="#8a8a8a" stroke-width="1.1"/></svg>
<div class="t" style="left:1258.60px;top:656.86px;font-size:12px;color:#000;letter-spacing:-0.337px;">Fewer details</div>
<div class="r" style="left:1334px;top:652px;width:1px;height:20px;background:#e0e0e0;"></div>
<svg class="r" style="left:1342px;top:653px;" width="17" height="17" viewBox="0 0 17 17"><circle cx="8.5" cy="8.5" r="7.5" fill="#eeeeee" stroke="#7a7a7a" stroke-width="1.2"/><circle cx="8.5" cy="8.5" r="5.8" fill="#fafafa"/><path d="M5.5 4.5l5.5 8" stroke="#b3202a" stroke-width="2"/></svg>
<div class="t" style="left:1364.40px;top:656.86px;font-size:12px;color:#2a6fb8;letter-spacing:-0.067px;">Open Resource Monitor</div>
<div class="r" style="left:0px;top:1040px;width:1920px;height:40px;background:#203240;"></div>
<div class="r" style="left:587px;top:1040px;width:48px;height:40px;background:#3d4a55;"></div>
<svg class="r" style="left:16px;top:1052px;" width="17" height="17" viewBox="0 0 17 17"><path d="M0 2.4L6.9 1.4v6.7H0zM7.8 1.3L17 0v8.1H7.8zM0 8.9h6.9v6.7L0 14.6zM7.8 8.9H17V17l-9.2-1.3z" fill="#fff"/></svg>
<svg class="r" style="left:63px;top:1051px;" width="18" height="18" viewBox="0 0 18 18"><circle cx="11" cy="7" r="6" fill="none" stroke="#fff" stroke-width="1.3"/><path d="M6.7 11.3L1 17" stroke="#fff" stroke-width="1.4"/></svg>
<svg class="r" style="left:111px;top:1051px;" width="18" height="18" viewBox="0 0 18 18"><circle cx="9" cy="9" r="7.3" fill="none" stroke="#fff" stroke-width="1.8"/></svg>
<svg class="r" style="left:159px;top:1051px;" width="18" height="18" viewBox="0 0 18 18"><path d="M1 1h12M1 17h12M3 4h8v10H3z" fill="none" stroke="#fff" stroke-width="1.4"/><path d="M16 1v3M16 6v11" stroke="#fff" stroke-width="1.6"/></svg>
<svg class="r" style="left:206px;top:1048px;" width="25" height="25" viewBox="0 0 25 25"><defs><linearGradient id="eg" x1="0" y1="0" x2="1" y2="1"><stop offset="0" stop-color="#35c1f1"/><stop offset=".6" stop-color="#52d86a"/><stop offset="1" stop-color="#2a8fd0"/></linearGradient></defs><circle cx="12.5" cy="12.5" r="12" fill="url(#eg)"/><path d="M2 14c1-6 6-9 11-8s6 5 4 8-7 1-8 5 3 6 8 5c-5 3-15 1-15-10z" fill="#1565c0"/><circle cx="14" cy="14" r="3.5" fill="#2a7fd0"/></svg>
<svg class="r" style="left:255px;top:1048px;" width="24" height="24" viewBox="0 0 24 24"><circle cx="12" cy="12" r="11.5" fill="#db4437"/><path d="M12 12L1.6 6A11.5 11.5 0 0 0 6.5 22z" fill="#0f9d58"/><path d="M12 12l-5.5 10A11.5 11.5 0 0 0 23.5 11z" fill="#f4c20d"/><circle cx="12" cy="12" r="5.3" fill="#fff"/><circle cx="12" cy="12" r="4.2" fill="#4285f4"/></svg>
<svg class="r" style="left:304px;top:1051px;" width="24" height="19" viewBox="0 0 24 19"><path d="M1 1h8l2 2h12v15H1z" fill="#e8b64a"/><path d="M1 5h22v13H1z" fill="#f8d775"/><path d="M7 12h10v6H7z" fill="#3a8fd8"/></svg>
<svg class="r" style="left:353px;top:1049px;" width="24" height="24" viewBox="0 0 24 24"><path d="M8 6a4 4 0 0 1 8 0" fill="none" stroke="#fff" stroke-width="1.5"/><rect x="1" y="6" width="22" height="17" fill="#fff"/><rect x="7" y="10" width="4.5" height="4.5" fill="#f25022"/><rect x="12.5" y="10" width="4.5" height="4.5" fill="#7fba00"/><rect x="7" y="15.5" width="4.5" height="4.5" fill="#00a4ef"/><rect x="12.5" y="15.5" width="4.5" height="4.5" fill="#ffb900"/></svg>
<svg class="r" style="left:402px;top:1050px;" width="25" height="20" viewBox="0 0 25 20"><path d="M1 8L12.5 1 24 8v11H1z" fill="#fff"/><path d="M1 8l11.5 7L24 8" fill="none" stroke="#203240" stroke-width="1.2"/><path d="M14 12l6 6" stroke="#203240" stroke-width="1.5"/></svg>
<svg class="r" style="left:451px;top:1048px;" width="24" height="24" viewBox="0 0 24 24"><circle cx="12" cy="12" r="12" fill="#2d8cff"/><path d="M5 8h9a2 2 0 0 1 2 2v6H7a2 2 0 0 1-2-2z" fill="#fff"/><path d="M17 11l3-2v7l-3-2z" fill="#fff"/></svg>
<svg class="r" style="left:501px;top:1050px;" width="21" height="21" viewBox="0 0 21 21"><circle cx="10.5" cy="10.5" r="6.2" fill="none" stroke="#fff" stroke-width="4.5" stroke-dasharray="3 2"/><circle cx="10.5" cy="10.5" r="4.3" fill="none" stroke="#fff" stroke-width="2.6"/></svg>
<svg class="r" style="left:550px;top:1049px;" width="24" height="22" viewBox="0 0 24 22"><rect x="10" y="1" width="12" height="14" fill="#ddd" stroke="#888"/><rect x="12" y="4" width="4" height="6" fill="#333"/><rect x="14" y="5" width="2" height="2" fill="#6c6"/><rect x="1" y="11" width="16" height="10" fill="#eee" stroke="#888"/><rect x="4" y="14" width="3" height="4" fill="#333"/><rect x="10" y="14" width="3" height="4" fill="#333"/></svg>
<svg class="r" style="left:599px;top:1049px;" width="24" height="22" viewBox="0 0 24 22"><rect x="3" y="1" width="19" height="14" fill="#d8e8f2" stroke="#aaa"/><path d="M5 11l4-6 3 5 3-6 4 8" fill="none" stroke="#2a6fa0" stroke-width="1.1"/><rect x="1" y="6" width="3" height="14" fill="#ccc"/><path d="M9 19h8" stroke="#ccc" stroke-width="2.5"/></svg>
<div class="r" style="left:297px;top:1078px;width:40px;height:2px;background:#8ab4e6;"></div>
<div class="r" style="left:493px;top:1078px;width:40px;height:2px;background:#8ab4e6;"></div>
<div class="r" style="left:542px;top:1078px;width:40px;height:2px;background:#8ab4e6;"></div>
<div class="r" style="left:587px;top:1078px;width:48px;height:2px;background:#8ab4e6;"></div>
<svg class="r" style="left:1646px;top:1054px;" width="13" height="8" viewBox="0 0 13 8"><path d="M1 7l5.5-5.5L12 7" fill="none" stroke="#fff" stroke-width="1.2"/></svg>
<svg class="r" style="left:1671px;top:1053px;" width="13" height="14" viewBox="0 0 13 14"><rect x=".5" y=".5" width="11" height="13" fill="none" stroke="#eee" stroke-width="1"/><g stroke="#ccc" stroke-width=".7" opacity=".8"><path d="M2.5 1v12M4.5 1v12M6.5 1v12M8.5 1v12M10 1v12M1 2.5h10M1 4.5h10M1 6.5h10M1 8.5h10M1 10.5h10M1 12.5h10"/></g></svg>
<svg class="r" style="left:1694px;top:1052px;" width="14" height="17" viewBox="0 0 14 17"><path d="M3 1h8M3 16h8" stroke="#ddd"/><rect x="1" y="5" width="8" height="7" rx="2" fill="none" stroke="#fff" stroke-width="1.2"/><path d="M10 7l3-2v7l-3-2" fill="none" stroke="#fff"/></svg>
<svg class="r" style="left:1716px;top:1053px;" width="18" height="16" viewBox="0 0 18 16"><rect x="5" y="2" width="12" height="9" fill="none" stroke="#fff" stroke-width="1.2"/><path d="M11 11v4M7 15h8" stroke="#fff" stroke-width="1.2"/><rect x="1" y="1" width="4" height="4" fill="none" stroke="#fff"/></svg>
<svg class="r" style="left:1741px;top:1052px;" width="17" height="16" viewBox="0 0 17 16"><path d="M1 5h3l4-4v14l-4-4H1z" fill="none" stroke="#fff" stroke-width="1.1"/><path d="M10 5a3.5 3.5 0 0 1 0 6M12.5 3a6.5 6.5 0 0 1 0 10M15 1.5a9 9 0 0 1 0 13" fill="none" stroke="#fff" stroke-width="1.1"/></svg>
<div class="t" style="left:1767.70px;top:1054.16px;font-size:12px;color:#fff;letter-spacing:-1.339px;">ENG</div>
<div class="t" style="left:1818.00px;top:1044.16px;font-size:12px;color:#fff;letter-spacing:-0.606px;">10:05</div>
<div class="t" style="left:1802.50px;top:1063.16px;font-size:12px;color:#fff;letter-spacing:-0.206px;">23/08/2564</div>
<svg class="r" style="left:1879px;top:1053px;" width="17" height="16" viewBox="0 0 17 16"><path d="M.6 .6h15.8v11H9.5L7.5 14.5 5.5 11.6H.6z" fill="none" stroke="#fff" stroke-width="1.2"/></svg>
<div class="r" style="left:1915px;top:1040px;width:1px;height:40px;background:#4a5560;"></div>
<svg class="r" style="left:1585px;top:983px;" width="90" height="90" viewBox="0 0 90 90"><defs><mask id="wmk"><rect x="0" y="0" width="90" height="90" fill="#fff"/><rect x="-12.3" y="-12.3" width="24.6" height="24.6" rx="4" transform="translate(45 45) rotate(45)" fill="#000"/></mask></defs><g mask="url(#wmk)"><rect x="-32" y="-32" width="64" height="64" rx="7" transform="translate(45 45) rotate(45)" fill="#f2a43a" opacity=".68"/></g><rect x="-12.3" y="-12.3" width="24.6" height="24.6" rx="4" transform="translate(45 45) rotate(45)" fill="#fff" fill-opacity=".5" stroke="#141c30" stroke-width="2.6" stroke-opacity=".9"/><g stroke="#141c30" stroke-width="2.6" opacity=".8"><path d="M52 68l6 6"/><path d="M57.5 62.5l6 6"/><path d="M63 57l6 6"/><path d="M68.5 51.5l6 6"/></g></svg>
<svg class="r" style="left:1684px;top:997px;" width="232" height="18" viewBox="0 0 232 18"><g fill="none" stroke="#000" stroke-opacity=".5" stroke-width="2.5"><g transform="translate(4 0)"><rect x="1.25" y="1.25" width="18.5" height="15" rx="4.5"/></g><g transform="translate(27 0)"><path d="M0 1L12.5 16.5 25 1"/></g><g transform="translate(55 0)"><path d="M12 1.25H5.5a4.25 4.25 0 0 0-4.25 4.25V12a4.25 4.25 0 0 0 4.25 4.25H20.5M1.25 9H20.5"/></g><g transform="translate(80 0)"><path d="M1.25 17.5V1.25H15.5a4 4 0 0 1 4 4v.5a4 4 0 0 1-4 4H1.25M12 9.5L20 17.5"/></g><g transform="translate(104 0)"><path d="M20.5 1.25H5.5a4.25 4.25 0 0 0-4.25 4.25V12a4.25 4.25 0 0 0 4.25 4.25H20.5"/></g><g transform="translate(131 0)"><path d="M1.25 0V16.25H20"/></g><g transform="translate(155 0)"><rect x="1.25" y="1.25" width="18.5" height="15" rx="4.5"/></g><g transform="translate(181 0)"><path d="M20.5 1.25H5.5a4.25 4.25 0 0 0-4.25 4.25V12a4.25 4.25 0 0 0 4.25 4.25H20.5"/></g><g transform="translate(206 0)"><path d="M1.25 0V17.5M19.5 .5L3 9l16.5 8"/></g></g></svg>
<svg class="r" style="left:1680px;top:990px;" width="240" height="75" viewBox="0 0 240 75"><g fill="none" stroke="#05070f" stroke-opacity=".62" stroke-width="5.5" stroke-linejoin="round"><path d="M25.5 32.8H54L13 66H55"/><rect x="66.75" y="32.25" width="42" height="33" rx="10"/><path d="M125 67V32L168 66V31"/><path d="M206 31.7H194.5a10 10 0 0 0-10 10V55.6a10 10 0 0 0 10 10H224M187.5 48H224"/></g></svg>
</body></html>
